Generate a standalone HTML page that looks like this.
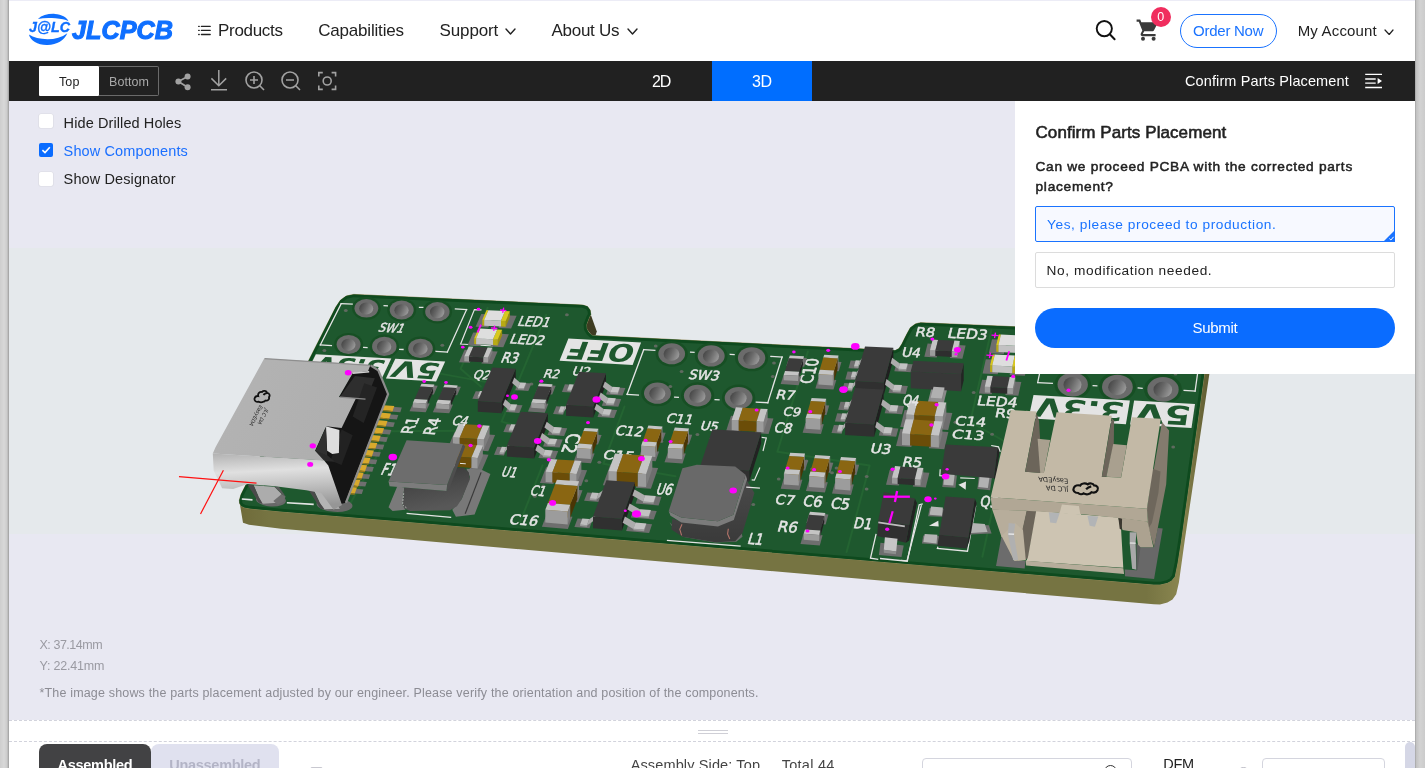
<!DOCTYPE html>
<html lang="en">
<head>
<meta charset="utf-8">
<title>JLCPCB - Confirm Parts Placement</title>
<style>
*{box-sizing:border-box;margin:0;padding:0}
html,body{width:1425px;height:768px;overflow:hidden}
body{font-family:"Liberation Sans",sans-serif;color:#222;background:linear-gradient(90deg,#cecece 0,#d8d8d8 4px,#cccccc 7px,#a8a8a8 8.5px,#a2a2a2 9px,#fff 9px,#fff 1415px,#a2a2a2 1415px,#c2c2c2 1416.4px,#d3d3d3 1420px,#cbcbcb 1425px);position:relative}
#page{position:absolute;left:9px;top:0;width:1406px;height:768px;background:#fff;overflow:hidden;will-change:transform}
.t{position:absolute;white-space:nowrap;display:block}
.a{position:absolute}
#hdr{position:absolute;left:0;top:0;width:1406px;height:61px;background:#fff;border-top:1px solid #ececf6}
#bar{position:absolute;left:0;top:61px;width:1406px;height:39.5px;background:#212121}
#view{position:absolute;left:0;top:100.5px;width:1406px;height:619.5px;background:#e8e8f2;overflow:hidden}
#canvas{position:absolute;left:0;top:147.5px;width:1406px;height:286px;background:#e5e9ec}
#pcb{position:absolute;left:-9px;top:-100.5px;width:1425px;height:768px}
#handle{position:absolute;left:0;top:720px;width:1406px;height:22px;background:#fff;border-top:1px dashed #d2d3dc;border-bottom:1px dashed #d2d3dc}
#panel{position:absolute;left:1005.8px;top:100.5px;width:400.2px;height:273px;background:#fff}
.cb{position:absolute;width:13.4px;height:13.4px;background:#fff;border-radius:2px;box-shadow:0 0 0 0.6px #dadae2}
.opt{position:absolute;left:1026px;width:360px;height:35.5px;border:1px solid #dcdcdc;border-radius:2px;background:#fff}
</style>
</head>
<body>
<div id="page">

<div id="hdr">
</div>
<svg class="a" style="left:19px;top:12px" width="148" height="36" viewBox="28 12 148 36">
<g fill="#0f6fff">
<path d="M28.9 34.6 C30.5 41 38 45.3 47.5 45 C57 44.7 64.5 40.2 67.3 33.2 C62 37.2 55 39.2 47.5 39.2 C40 39.2 33.5 37.6 28.9 34.6Z"/>
<path d="M37.9 18.9 C42 15.2 48.5 13.5 55 13.9 C61.5 14.3 66.8 17 68.5 21.3 C65.5 19.4 61 18.6 55.5 18.2 C49 17.7 43 17.8 37.9 18.9Z"/>
</g>
<text x="29" y="31.8" font-family="Liberation Sans, sans-serif" font-weight="700" font-style="italic" font-size="14.5" fill="#0f6fff" stroke="#0f6fff" stroke-width="0.3" textLength="41" lengthAdjust="spacingAndGlyphs">J@LC</text>
<text x="72" y="39" font-family="Liberation Sans, sans-serif" font-weight="700" font-style="italic" font-size="26" fill="#0f6fff" stroke="#0f6fff" stroke-width="1.1" textLength="101" lengthAdjust="spacingAndGlyphs">JLCPCB</text>
</svg>
<svg class="a" style="left:189px;top:24px" width="13" height="13" viewBox="0 0 13 13"><g fill="none" stroke="#222" stroke-width="1.3" stroke-linecap="round"><path d="M3.4 2.4H12.2M3.4 6.4H12.2M3.4 10.5H12.2"/><path d="M0.7 2.4h0.5M0.7 6.4h0.5M0.7 10.5h0.5"/></g></svg>
<span class="t" style="left:209.00px;top:21.00px;font-size:17.00px;line-height:20px;letter-spacing:-0.298px;color:#222;">Products</span>
<span class="t" style="left:309.20px;top:21.00px;font-size:17.00px;line-height:20px;letter-spacing:-0.189px;color:#222;">Capabilities</span>
<span class="t" style="left:430.50px;top:21.00px;font-size:17.00px;line-height:20px;letter-spacing:-0.124px;color:#222;">Support</span>
<span class="t" style="left:542.50px;top:21.00px;font-size:17.00px;line-height:20px;letter-spacing:-0.275px;color:#222;">About Us</span>
<svg class="a" style="left:495.5px;top:27.8px" width="11" height="7" viewBox="-1 -1 11 7"><path d="M0 0L4.5 5.0L9 0" fill="none" stroke="#222" stroke-width="1.4" stroke-linecap="round" stroke-linejoin="round"/></svg>
<svg class="a" style="left:617.5px;top:27.8px" width="11" height="7" viewBox="-1 -1 11 7"><path d="M0 0L4.5 5.0L9 0" fill="none" stroke="#222" stroke-width="1.4" stroke-linecap="round" stroke-linejoin="round"/></svg>
<svg class="a" style="left:1086px;top:19px" width="22" height="22" viewBox="0 0 22 22"><circle cx="9.3" cy="9.6" r="7.6" fill="none" stroke="#111" stroke-width="1.9"/><path d="M14.8 15.2L19.6 20.2" stroke="#111" stroke-width="2" stroke-linecap="round"/></svg>
<svg class="a" style="left:1127px;top:19px" width="24" height="23" viewBox="0 0 24 23"><g fill="#3a3a3a"><path d="M0.6 0.6H4.2L5.3 3.2H20.6C21.4 3.2 21.8 3.9 21.5 4.6L18 11.3C17.7 11.9 17 12.3 16.3 12.3H8.3L7 14.6C6.9 14.8 7 15.1 7.3 15.1H19.6V17.2H6.6C5 17.2 4.1 15.5 4.9 14.2L6.3 11.6L2.8 2.8H0.6Z"/><circle cx="7" cy="19.8" r="2"/><circle cx="17.6" cy="19.8" r="2"/></g></svg>
<div class="a" style="left:1141.5px;top:7px;width:20px;height:20px;border-radius:10px;background:#f02d5e"></div>
<span class="t" style="left:1148.20px;top:10.00px;font-size:12.50px;line-height:15px;letter-spacing:0.048px;color:#fff;">0</span>
<div class="a" style="left:1171px;top:14px;width:97px;height:34px;border:1px solid #1a73ff;border-radius:17px"></div>
<span class="t" style="left:1184.10px;top:22.00px;font-size:15.00px;line-height:18px;letter-spacing:-0.265px;color:#1a73ff;">Order Now</span>
<span class="t" style="left:1288.70px;top:22.00px;font-size:15.00px;line-height:18px;letter-spacing:0.174px;color:#222;">My Account</span>
<svg class="a" style="left:1374.7px;top:28.9px" width="10" height="6" viewBox="-1 -1 10 6"><path d="M0 0L4.2 4.5L8 0" fill="none" stroke="#222" stroke-width="1.2" stroke-linecap="round" stroke-linejoin="round"/></svg>
<div id="bar">
<div class="a" style="left:30px;top:5px;width:60px;height:30px;background:#fff;border-radius:1px"></div>
<div class="a" style="left:90px;top:5px;width:59.5px;height:30px;border:1px solid #6a6a6a;border-left:none;border-radius:0 2px 2px 0"></div>
<div class="a" style="left:703px;top:0;width:100px;height:39.5px;background:#006eff"></div>
</div>
<span class="t" style="left:50.00px;top:75.00px;font-size:12.50px;line-height:15px;letter-spacing:0.123px;color:#222;">Top</span>
<span class="t" style="left:100.00px;top:75.00px;font-size:12.50px;line-height:15px;letter-spacing:0.080px;color:#a9a9a9;">Bottom</span>
<span class="t" style="left:643.00px;top:72.00px;font-size:16.00px;line-height:19px;letter-spacing:-1.053px;color:#fff;">2D</span>
<span class="t" style="left:742.90px;top:72.00px;font-size:16.00px;line-height:19px;letter-spacing:-0.353px;color:#fff;">3D</span>
<span class="t" style="left:1176.00px;top:73.00px;font-size:14.50px;line-height:17px;letter-spacing:0.115px;color:#fff;">Confirm Parts Placement</span>
<svg class="a" style="left:165px;top:72px" width="19" height="19" viewBox="174 72 19 19"><g fill="#a2a2a2"><circle cx="187.6" cy="76.6" r="3"/><circle cx="178.4" cy="81.6" r="3"/><circle cx="187.6" cy="87.2" r="3"/></g><path d="M187.6 76.6L178.4 81.6L187.6 87.2" fill="none" stroke="#a2a2a2" stroke-width="1.7"/></svg>
<svg class="a" style="left:200px;top:69px" width="20" height="23" viewBox="209 69 20 23"><g fill="none" stroke="#a2a2a2" stroke-width="1.5"><path d="M218.8 70V85.6M211.4 78.4L218.8 85.8L226.2 78.4M211 89.8H227"/></g></svg>
<svg class="a" style="left:235px;top:70px" width="22" height="22" viewBox="244 70 22 22"><g fill="none" stroke="#a2a2a2" stroke-width="1.6"><circle cx="254" cy="80" r="8"/><path d="M259.8 85.8L264 90M250 80H258M254 76V84"/></g></svg>
<svg class="a" style="left:271px;top:70px" width="22" height="22" viewBox="280 70 22 22"><g fill="none" stroke="#a2a2a2" stroke-width="1.6"><circle cx="290" cy="80" r="8"/><path d="M295.8 85.8L300 90M286 80H294"/></g></svg>
<svg class="a" style="left:308px;top:70px" width="22" height="22" viewBox="317 70 22 22"><g fill="none" stroke="#a2a2a2" stroke-width="1.6"><circle cx="327.2" cy="81" r="4"/><path d="M318.8 76.5V72.6H322.8M331.6 72.6H335.6V76.5M335.6 85.5V89.4H331.6M322.8 89.4H318.8V85.5"/></g></svg>
<svg class="a" style="left:1355px;top:72px" width="20" height="17" viewBox="1364 72 20 17"><g fill="none" stroke="#fff" stroke-width="1.3"><path d="M1365.2 74.4H1382M1365.2 79H1375.7M1365.2 83.2H1375.7M1365.2 87.5H1382"/></g><path d="M1377.6 78.1L1382 81L1377.6 83.9Z" fill="#fff"/></svg>
<div id="view"><div id="canvas"></div>
<svg id="pcb" viewBox="0 0 1425 768"><defs><clipPath id="cb"><polygon points="335.7,307.3 340.4,300.2 346.2,296.1 353.8,294.4 582.8,305.1 587.5,306.6 590.2,310.2 590.8,314.5 589.3,317.1 586.4,324.6 586.7,328.9 589.0,332.8 591.9,335.4 595.5,335.7 895.1,350.6 899.0,348.6 901.9,343.9 906.1,335.4 910.3,327.8 915.4,323.9 920.5,322.7 1209.8,335.0 1204.3,373.9 1181.1,540.0 1177.5,562.8 1174.7,576.4 1171.5,580.6 1167.4,582.8 1160.0,584.6 1153.8,584.6 385.0,520.0 281.1,511.5 250.0,508.6 244.5,507.6 241.3,505.9 239.6,503.3 239.4,500.3 241.0,494.5 309.3,359.4"/></clipPath></defs>
<defs><linearGradient id="gh" x1="0" y1="0.3" x2="1" y2="0.7"><stop offset="0" stop-color="#454545"/><stop offset="0.45" stop-color="#686868"/><stop offset="1" stop-color="#9e9e9e"/></linearGradient></defs>
<defs><linearGradient id="gw" x1="0" y1="0" x2="1" y2="0"><stop offset="0" stop-color="#6f6b3a"/><stop offset="0.03" stop-color="#767442"/><stop offset="0.93" stop-color="#767442"/><stop offset="0.965" stop-color="#8a8650"/><stop offset="1" stop-color="#55522a"/></linearGradient></defs>
<polygon points="239.4,501.4 243.0,522.7 249.0,524.8 281.1,528.8 385.0,537.6 1153.8,604.3 1160.0,604.4 1167.4,602.6 1172.5,599.4 1176.2,594.2 1178.9,582.6 1184.8,540.0 1209.2,374.9 1214.8,335.2 1209.8,335.0 1204.3,373.9 1181.1,540.0 1177.5,562.8 1174.7,576.4 1171.5,580.6 1167.4,582.8 1160.0,584.6 1153.8,584.6 385.0,520.0 281.1,511.5 250.0,508.6 244.5,507.6 241.3,505.9 239.6,503.3" fill="url(#gw)"/>
<polygon points="590.9,314.9 596.8,331.5 595.5,335.6 591.9,335.8 586.7,328.9 586.4,324.6 589.3,317.1" fill="#3e3c22"/>
<polygon points="335.7,307.3 340.4,300.2 346.2,296.1 353.8,294.4 582.8,305.1 587.5,306.6 590.2,310.2 590.8,314.5 589.3,317.1 586.4,324.6 586.7,328.9 589.0,332.8 591.9,335.4 595.5,335.7 895.1,350.6 899.0,348.6 901.9,343.9 906.1,335.4 910.3,327.8 915.4,323.9 920.5,322.7 1209.8,335.0 1204.3,373.9 1181.1,540.0 1177.5,562.8 1174.7,576.4 1171.5,580.6 1167.4,582.8 1160.0,584.6 1153.8,584.6 385.0,520.0 281.1,511.5 250.0,508.6 244.5,507.6 241.3,505.9 239.6,503.3 239.4,500.3 241.0,494.5 309.3,359.4" fill="#0e4a1e" stroke="#8f8858" stroke-width="0.9" stroke-linejoin="round"/>
<polygon points="335.7,307.3 340.4,300.2 346.2,296.1 353.8,294.4 582.8,305.1 587.5,306.6 590.2,310.2 590.8,314.5 589.3,317.1 586.4,324.6 586.7,328.9 589.0,332.8 591.9,335.4 595.5,335.7 895.1,350.6 899.0,348.6 901.9,343.9 906.1,335.4 910.3,327.8 915.4,323.9 920.5,322.7 1209.8,335.0 1204.3,373.9 1181.1,540.0 1177.5,562.8 1174.7,576.4 1171.5,580.6 1167.4,582.8 1160.0,584.6 1153.8,584.6 385.0,520.0 281.1,511.5 250.0,508.6 244.5,507.6 241.3,505.9 239.6,503.3 239.4,500.3 241.0,494.5 309.3,359.4" fill="#1e582e" stroke="#0e4a1e" stroke-width="5.5" stroke-linejoin="round" clip-path="url(#cb)"/>
<polyline points="487.6,307.9 460.6,368.8 480.8,386.5" fill="none" stroke="#246432" stroke-width="2.00" stroke-linejoin="round" stroke-linecap="round"/>
<polyline points="350.3,357.2 489.5,382.6" fill="none" stroke="#246432" stroke-width="1.60" stroke-linejoin="round" stroke-linecap="round"/>
<polyline points="546.1,314.9 501.6,421.6 553.8,436.6" fill="none" stroke="#246432" stroke-width="2.00" stroke-linejoin="round" stroke-linecap="round"/>
<polyline points="624.5,406.5 603.3,463.8 675.5,476.3" fill="none" stroke="#246432" stroke-width="2.00" stroke-linejoin="round" stroke-linecap="round"/>
<polyline points="807.9,351.5 777.4,451.8 869.6,465.5 846.6,552.1" fill="none" stroke="#246432" stroke-width="2.00" stroke-linejoin="round" stroke-linecap="round"/>
<polyline points="991.3,330.5 970.2,422.0 1006.9,442.6 982.4,556.7" fill="none" stroke="#246432" stroke-width="2.00" stroke-linejoin="round" stroke-linecap="round"/>
<polyline points="520.0,522.4 542.5,465.4" fill="none" stroke="#246432" stroke-width="2.00" stroke-linejoin="round" stroke-linecap="round"/>
<polyline points="348.4,507.0 390.5,431.2 468.8,430.8" fill="none" stroke="#246432" stroke-width="2.00" stroke-linejoin="round" stroke-linecap="round"/>
<ellipse cx="366.4" cy="308.3" rx="14.3" ry="11.5" fill="#174f24"/>
<ellipse cx="366.4" cy="308.3" rx="11.9" ry="9.3" fill="#6b6b6b"/>
<ellipse cx="366.2" cy="308.6" rx="7.0" ry="6.0" fill="url(#gh)"/>
<ellipse cx="348.6" cy="344.5" rx="14.5" ry="11.6" fill="#174f24"/>
<ellipse cx="348.6" cy="344.5" rx="12.0" ry="9.4" fill="#6b6b6b"/>
<ellipse cx="348.4" cy="344.8" rx="7.1" ry="6.1" fill="url(#gh)"/>
<ellipse cx="401.7" cy="310.0" rx="14.5" ry="11.6" fill="#174f24"/>
<ellipse cx="401.7" cy="310.0" rx="12.0" ry="9.4" fill="#6b6b6b"/>
<ellipse cx="401.5" cy="310.3" rx="7.1" ry="6.1" fill="url(#gh)"/>
<ellipse cx="384.3" cy="346.4" rx="14.7" ry="11.8" fill="#174f24"/>
<ellipse cx="384.3" cy="346.4" rx="12.2" ry="9.6" fill="#6b6b6b"/>
<ellipse cx="384.1" cy="346.7" rx="7.2" ry="6.2" fill="url(#gh)"/>
<ellipse cx="437.4" cy="311.7" rx="14.7" ry="11.8" fill="#174f24"/>
<ellipse cx="437.4" cy="311.7" rx="12.2" ry="9.6" fill="#6b6b6b"/>
<ellipse cx="437.2" cy="312.0" rx="7.2" ry="6.2" fill="url(#gh)"/>
<ellipse cx="420.5" cy="348.4" rx="14.8" ry="11.9" fill="#174f24"/>
<ellipse cx="420.5" cy="348.4" rx="12.3" ry="9.7" fill="#6b6b6b"/>
<ellipse cx="420.3" cy="348.7" rx="7.3" ry="6.2" fill="url(#gh)"/>
<ellipse cx="671.7" cy="353.8" rx="16.1" ry="12.9" fill="#174f24"/>
<ellipse cx="671.7" cy="353.8" rx="13.4" ry="10.5" fill="#6b6b6b"/>
<ellipse cx="671.5" cy="354.1" rx="7.9" ry="6.7" fill="url(#gh)"/>
<ellipse cx="657.5" cy="393.2" rx="16.3" ry="13.1" fill="#174f24"/>
<ellipse cx="657.5" cy="393.2" rx="13.5" ry="10.6" fill="#6b6b6b"/>
<ellipse cx="657.3" cy="393.5" rx="8.0" ry="6.8" fill="url(#gh)"/>
<ellipse cx="711.2" cy="355.9" rx="16.3" ry="13.1" fill="#174f24"/>
<ellipse cx="711.2" cy="355.9" rx="13.5" ry="10.6" fill="#6b6b6b"/>
<ellipse cx="711.0" cy="356.2" rx="8.0" ry="6.8" fill="url(#gh)"/>
<ellipse cx="697.6" cy="395.6" rx="16.5" ry="13.3" fill="#174f24"/>
<ellipse cx="697.6" cy="395.6" rx="13.7" ry="10.8" fill="#6b6b6b"/>
<ellipse cx="697.4" cy="395.9" rx="8.1" ry="6.9" fill="url(#gh)"/>
<ellipse cx="751.6" cy="358.0" rx="16.5" ry="13.3" fill="#174f24"/>
<ellipse cx="751.6" cy="358.0" rx="13.7" ry="10.8" fill="#6b6b6b"/>
<ellipse cx="751.4" cy="358.3" rx="8.1" ry="6.9" fill="url(#gh)"/>
<ellipse cx="738.6" cy="398.0" rx="16.7" ry="13.5" fill="#174f24"/>
<ellipse cx="738.6" cy="398.0" rx="13.9" ry="10.9" fill="#6b6b6b"/>
<ellipse cx="738.4" cy="398.3" rx="8.2" ry="7.0" fill="url(#gh)"/>
<ellipse cx="1072.7" cy="384.5" rx="18.3" ry="14.7" fill="#174f24"/>
<ellipse cx="1072.7" cy="384.5" rx="15.2" ry="12.0" fill="#6b6b6b"/>
<ellipse cx="1072.5" cy="384.8" rx="9.0" ry="7.7" fill="url(#gh)"/>
<ellipse cx="1117.4" cy="386.9" rx="18.6" ry="14.9" fill="#174f24"/>
<ellipse cx="1117.4" cy="386.9" rx="15.4" ry="12.1" fill="#6b6b6b"/>
<ellipse cx="1117.2" cy="387.2" rx="9.1" ry="7.8" fill="url(#gh)"/>
<ellipse cx="1163.0" cy="389.4" rx="18.9" ry="15.1" fill="#174f24"/>
<ellipse cx="1163.0" cy="389.4" rx="15.7" ry="12.3" fill="#6b6b6b"/>
<ellipse cx="1162.8" cy="389.7" rx="9.3" ry="7.9" fill="url(#gh)"/>
<polyline points="341.2,303.6 320.3,345.0" fill="none" stroke="#e4e4e4" stroke-width="1.30" stroke-linecap="square"/>
<polyline points="466.6,309.5 447.4,352.0" fill="none" stroke="#e4e4e4" stroke-width="1.30" stroke-linecap="square"/>
<polyline points="341.2,303.6 352.2,304.1" fill="none" stroke="#e4e4e4" stroke-width="1.30" stroke-linecap="square"/>
<polyline points="384.1,305.6 387.3,305.8" fill="none" stroke="#e4e4e4" stroke-width="1.30" stroke-linecap="square"/>
<polyline points="419.5,307.3 422.8,307.4" fill="none" stroke="#e4e4e4" stroke-width="1.30" stroke-linecap="square"/>
<polyline points="455.4,309.0 466.6,309.5" fill="none" stroke="#e4e4e4" stroke-width="1.30" stroke-linecap="square"/>
<polyline points="320.3,345.0 331.4,345.6" fill="none" stroke="#e4e4e4" stroke-width="1.30" stroke-linecap="square"/>
<polyline points="363.7,347.4 367.0,347.6" fill="none" stroke="#e4e4e4" stroke-width="1.30" stroke-linecap="square"/>
<polyline points="399.7,349.4 403.0,349.5" fill="none" stroke="#e4e4e4" stroke-width="1.30" stroke-linecap="square"/>
<polyline points="436.1,351.3 447.4,352.0" fill="none" stroke="#e4e4e4" stroke-width="1.30" stroke-linecap="square"/>
<polyline points="643.7,349.7 627.1,394.3" fill="none" stroke="#e4e4e4" stroke-width="1.30" stroke-linecap="square"/>
<polyline points="782.1,357.0 767.8,402.7" fill="none" stroke="#e4e4e4" stroke-width="1.30" stroke-linecap="square"/>
<polyline points="643.7,349.7 654.8,350.3" fill="none" stroke="#e4e4e4" stroke-width="1.30" stroke-linecap="square"/>
<polyline points="690.6,352.2 694.0,352.3" fill="none" stroke="#e4e4e4" stroke-width="1.30" stroke-linecap="square"/>
<polyline points="730.3,354.3 734.1,354.5" fill="none" stroke="#e4e4e4" stroke-width="1.30" stroke-linecap="square"/>
<polyline points="770.9,356.4 782.1,357.0" fill="none" stroke="#e4e4e4" stroke-width="1.30" stroke-linecap="square"/>
<polyline points="627.1,394.3 638.4,395.0" fill="none" stroke="#e4e4e4" stroke-width="1.30" stroke-linecap="square"/>
<polyline points="674.7,397.2 678.3,397.4" fill="none" stroke="#e4e4e4" stroke-width="1.30" stroke-linecap="square"/>
<polyline points="715.1,399.6 719.0,399.8" fill="none" stroke="#e4e4e4" stroke-width="1.30" stroke-linecap="square"/>
<polyline points="756.3,402.1 767.8,402.7" fill="none" stroke="#e4e4e4" stroke-width="1.30" stroke-linecap="square"/>
<polyline points="1044.0,352.2 1037.7,382.6" fill="none" stroke="#e4e4e4" stroke-width="1.30" stroke-linecap="square"/>
<polyline points="1199.5,360.0 1195.1,391.1" fill="none" stroke="#e4e4e4" stroke-width="1.30" stroke-linecap="square"/>
<polyline points="1044.0,352.2 1058.4,353.0" fill="none" stroke="#e4e4e4" stroke-width="1.30" stroke-linecap="square"/>
<polyline points="1098.8,355.0 1102.4,355.1" fill="none" stroke="#e4e4e4" stroke-width="1.30" stroke-linecap="square"/>
<polyline points="1143.3,357.2 1147.1,357.4" fill="none" stroke="#e4e4e4" stroke-width="1.30" stroke-linecap="square"/>
<polyline points="1188.7,359.4 1199.5,360.0" fill="none" stroke="#e4e4e4" stroke-width="1.30" stroke-linecap="square"/>
<polyline points="1037.7,382.6 1052.3,383.4" fill="none" stroke="#e4e4e4" stroke-width="1.30" stroke-linecap="square"/>
<polyline points="1093.2,385.6 1096.8,385.8" fill="none" stroke="#e4e4e4" stroke-width="1.30" stroke-linecap="square"/>
<polyline points="1138.2,388.0 1142.1,388.3" fill="none" stroke="#e4e4e4" stroke-width="1.30" stroke-linecap="square"/>
<polyline points="1184.1,390.5 1195.1,391.1" fill="none" stroke="#e4e4e4" stroke-width="1.30" stroke-linecap="square"/>
<polyline points="481.5,309.8 474.4,309.6 460.6,344.0 493.1,346.0" fill="none" stroke="#e4e4e4" stroke-width="1.20"/>
<polygon points="315.9,354.2 391.3,358.4 381.9,378.3 306.0,373.8" fill="#e4e4e4"/>
<text transform="matrix(-0.9984 -0.0564 0.4289 -0.9059 387.29 360.47)" font-family="DejaVu Sans, sans-serif" font-weight="bold" font-size="23.7" fill="#1e582e" textLength="69.5" lengthAdjust="spacingAndGlyphs">3.3V</text>
<polygon points="395.3,358.7 445.2,361.5 436.1,381.6 385.9,378.6" fill="#e4e4e4"/>
<text transform="matrix(-0.9984 -0.0564 0.4118 -0.9132 442.21 363.59)" font-family="DejaVu Sans, sans-serif" font-weight="bold" font-size="23.8" fill="#1e582e" textLength="46.0" lengthAdjust="spacingAndGlyphs">5V</text>
<polygon points="568.4,338.6 641.1,342.4 632.6,364.9 559.5,360.8" fill="#e4e4e4"/>
<text transform="matrix(-0.9987 -0.0514 0.3513 -0.9399 637.22 344.71)" font-family="DejaVu Sans, sans-serif" font-weight="bold" font-size="25.8" fill="#1e582e" textLength="66.9" lengthAdjust="spacingAndGlyphs">OFF</text>
<polygon points="1033.5,394.9 1129.9,400.4 1125.9,424.2 1028.6,418.3" fill="#e4e4e4"/>
<text transform="matrix(-0.9984 -0.0564 0.1678 -0.9960 1125.62 402.78)" font-family="DejaVu Sans, sans-serif" font-weight="bold" font-size="25.8" fill="#1e582e" textLength="88.9" lengthAdjust="spacingAndGlyphs">3.3V</text>
<polygon points="1134.1,400.6 1195.0,404.1 1191.5,428.1 1130.1,424.4" fill="#e4e4e4"/>
<text transform="matrix(-0.9984 -0.0564 0.1417 -0.9970 1192.16 406.57)" font-family="DejaVu Sans, sans-serif" font-weight="bold" font-size="26.1" fill="#1e582e" textLength="56.1" lengthAdjust="spacingAndGlyphs">5V</text>
<ellipse cx="345.8" cy="310.4" rx="1.9" ry="1.5" fill="#5f6a5f"/>
<ellipse cx="442.3" cy="345.3" rx="1.9" ry="1.5" fill="#5f6a5f"/>
<ellipse cx="324.4" cy="350.5" rx="1.9" ry="1.5" fill="#5f6a5f"/>
<ellipse cx="566.9" cy="314.8" rx="1.9" ry="1.5" fill="#5f6a5f"/>
<ellipse cx="655.7" cy="345.9" rx="1.9" ry="1.5" fill="#5f6a5f"/>
<ellipse cx="681.6" cy="371.5" rx="1.9" ry="1.5" fill="#5f6a5f"/>
<ellipse cx="670.3" cy="386.6" rx="1.9" ry="1.5" fill="#5f6a5f"/>
<ellipse cx="774.0" cy="363.1" rx="1.9" ry="1.5" fill="#5f6a5f"/>
<ellipse cx="772.8" cy="376.6" rx="1.9" ry="1.5" fill="#5f6a5f"/>
<ellipse cx="531.5" cy="384.0" rx="1.9" ry="1.5" fill="#5f6a5f"/>
<ellipse cx="464.3" cy="424.8" rx="1.9" ry="1.5" fill="#5f6a5f"/>
<ellipse cx="697.4" cy="434.5" rx="1.9" ry="1.5" fill="#5f6a5f"/>
<ellipse cx="711.3" cy="439.0" rx="1.9" ry="1.5" fill="#5f6a5f"/>
<ellipse cx="661.4" cy="441.6" rx="1.9" ry="1.5" fill="#5f6a5f"/>
<ellipse cx="676.0" cy="439.0" rx="1.9" ry="1.5" fill="#5f6a5f"/>
<ellipse cx="791.8" cy="456.4" rx="1.9" ry="1.5" fill="#5f6a5f"/>
<ellipse cx="806.4" cy="461.1" rx="1.9" ry="1.5" fill="#5f6a5f"/>
<ellipse cx="822.1" cy="462.2" rx="1.9" ry="1.5" fill="#5f6a5f"/>
<ellipse cx="836.5" cy="468.1" rx="1.9" ry="1.5" fill="#5f6a5f"/>
<ellipse cx="851.4" cy="472.9" rx="1.9" ry="1.5" fill="#5f6a5f"/>
<ellipse cx="866.7" cy="476.5" rx="1.9" ry="1.5" fill="#5f6a5f"/>
<ellipse cx="812.1" cy="468.9" rx="1.9" ry="1.5" fill="#5f6a5f"/>
<ellipse cx="832.0" cy="472.8" rx="1.9" ry="1.5" fill="#5f6a5f"/>
<ellipse cx="866.6" cy="489.0" rx="1.9" ry="1.5" fill="#5f6a5f"/>
<ellipse cx="778.7" cy="478.9" rx="1.9" ry="1.5" fill="#5f6a5f"/>
<ellipse cx="753.3" cy="504.5" rx="1.9" ry="1.5" fill="#5f6a5f"/>
<ellipse cx="988.0" cy="365.4" rx="1.9" ry="1.5" fill="#5f6a5f"/>
<ellipse cx="973.7" cy="392.5" rx="1.9" ry="1.5" fill="#5f6a5f"/>
<ellipse cx="955.4" cy="422.3" rx="1.9" ry="1.5" fill="#5f6a5f"/>
<ellipse cx="992.1" cy="434.3" rx="1.9" ry="1.5" fill="#5f6a5f"/>
<ellipse cx="942.0" cy="437.2" rx="1.9" ry="1.5" fill="#5f6a5f"/>
<ellipse cx="1173.2" cy="446.9" rx="1.9" ry="1.5" fill="#5f6a5f"/>
<ellipse cx="1175.5" cy="374.0" rx="1.9" ry="1.5" fill="#5f6a5f"/>
<ellipse cx="543.4" cy="486.0" rx="1.9" ry="1.5" fill="#5f6a5f"/>
<ellipse cx="534.8" cy="496.3" rx="1.9" ry="1.5" fill="#5f6a5f"/>
<ellipse cx="599.3" cy="462.3" rx="1.9" ry="1.5" fill="#5f6a5f"/>
<ellipse cx="586.3" cy="480.7" rx="1.9" ry="1.5" fill="#5f6a5f"/>
<text transform="matrix(1.5268 0.0891 -0.5167 1.1927 482.60 374.75)" x="0" y="3.65" text-anchor="middle" font-family="DejaVu Sans, sans-serif" font-size="10.0" font-weight="normal" fill="#e4e4e4" stroke="#e4e4e4" stroke-width="0.38" textLength="11.13" lengthAdjust="spacingAndGlyphs">Q2</text>
<text transform="matrix(1.5508 0.0880 -0.4681 1.1897 581.85 371.15)" x="0" y="3.65" text-anchor="middle" font-family="DejaVu Sans, sans-serif" font-size="10.0" font-weight="normal" fill="#e4e4e4" stroke="#e4e4e4" stroke-width="0.38" textLength="11.51" lengthAdjust="spacingAndGlyphs">U2</text>
<text transform="matrix(1.9218 0.1451 -0.7185 1.5838 389.50 469.30)" x="0" y="3.65" text-anchor="middle" font-family="DejaVu Sans, sans-serif" font-size="10.0" font-weight="normal" fill="#e4e4e4" stroke="#e4e4e4" stroke-width="0.38" textLength="7.14" lengthAdjust="spacingAndGlyphs">F1</text>
<text transform="matrix(1.5706 0.1105 -0.4531 1.2385 619.00 455.40)" x="0" y="3.65" text-anchor="middle" font-family="DejaVu Sans, sans-serif" font-size="10.0" font-weight="normal" fill="#e4e4e4" stroke="#e4e4e4" stroke-width="0.38" textLength="19.49" lengthAdjust="spacingAndGlyphs">C15</text>
<text transform="matrix(1.6631 0.0991 -0.2635 1.2124 1005.55 413.25)" x="0" y="3.65" text-anchor="middle" font-family="DejaVu Sans, sans-serif" font-size="10.0" font-weight="normal" fill="#e4e4e4" stroke="#e4e4e4" stroke-width="0.38" textLength="12.59" lengthAdjust="spacingAndGlyphs">R9</text>
<text transform="matrix(1.5761 0.1017 -0.4042 1.2104 709.90 426.00)" x="0" y="3.65" text-anchor="middle" font-family="DejaVu Sans, sans-serif" font-size="10.0" font-weight="normal" fill="#e4e4e4" stroke="#e4e4e4" stroke-width="0.38" textLength="11.43" lengthAdjust="spacingAndGlyphs">U5</text>
<text transform="matrix(1.9829 0.1457 -0.3242 1.5004 989.65 501.75)" x="0" y="3.65" text-anchor="middle" font-family="DejaVu Sans, sans-serif" font-size="10.0" font-weight="normal" fill="#e4e4e4" stroke="#e4e4e4" stroke-width="0.38" textLength="9.22" lengthAdjust="spacingAndGlyphs">Q3</text>
<text transform="matrix(0.5829 -1.2854 1.5925 0.1078 409.90 425.40)" x="0" y="3.65" text-anchor="middle" font-family="DejaVu Sans, sans-serif" font-size="10.0" font-weight="normal" fill="#e4e4e4" stroke="#e4e4e4" stroke-width="0.38">R1</text>
<text transform="matrix(0.5736 -1.2906 1.6043 0.1085 432.00 426.50)" x="0" y="3.65" text-anchor="middle" font-family="DejaVu Sans, sans-serif" font-size="10.0" font-weight="normal" fill="#e4e4e4" stroke="#e4e4e4" stroke-width="0.38">R4</text>
<text transform="matrix(0.3901 -1.2962 1.7535 0.0959 809.20 371.00)" x="0" y="3.65" text-anchor="middle" font-family="DejaVu Sans, sans-serif" font-size="10.0" font-weight="normal" fill="#e4e4e4" stroke="#e4e4e4" stroke-width="0.38">C10</text>
<text transform="matrix(-0.5763 1.4917 -1.8856 -0.1299 571.50 443.50)" x="0" y="3.65" text-anchor="middle" font-family="DejaVu Sans, sans-serif" font-size="10.0" font-weight="normal" fill="#e4e4e4" stroke="#e4e4e4" stroke-width="0.38">C2</text>
<polygon points="481.3,314.1 493.9,314.7 488.3,327.4 475.6,326.8" fill="#6e6e6e"/>
<polygon points="503.9,315.2 516.6,315.8 511.1,328.6 498.3,327.9" fill="#6e6e6e"/>
<polygon points="488.4,310.2 484.2,319.9 484.2,325.7 488.4,316.0" fill="#9a8e10"/>
<polygon points="482.3,319.8 484.2,319.9 484.2,325.7 482.3,325.6" fill="#b8aa14"/>
<polygon points="486.6,310.1 488.4,310.2 484.2,319.9 482.3,319.8" fill="#d8c81e"/>
<polygon points="505.2,311.0 501.0,320.7 501.0,326.5 505.2,316.8" fill="#9a9a9a"/>
<polygon points="484.2,319.9 501.0,320.7 501.0,326.5 484.2,325.7" fill="#c2c2c2"/>
<polygon points="488.4,310.2 505.2,311.0 501.0,320.7 484.2,319.9" fill="#dedede"/>
<polygon points="509.9,311.2 505.7,320.9 505.7,326.7 509.9,317.0" fill="#9a8e10"/>
<polygon points="501.0,320.7 505.7,320.9 505.7,326.7 501.0,326.5" fill="#b8aa14"/>
<polygon points="505.2,311.0 509.9,311.2 505.7,320.9 501.0,320.7" fill="#d8c81e"/>
<polygon points="473.2,332.4 485.9,333.1 480.3,346.0 467.5,345.3" fill="#6e6e6e"/>
<polygon points="496.0,333.6 508.8,334.3 503.3,347.3 490.4,346.6" fill="#6e6e6e"/>
<polygon points="480.4,328.6 476.1,338.4 476.1,344.2 480.4,334.4" fill="#9a8e10"/>
<polygon points="474.2,338.3 476.1,338.4 476.1,344.2 474.2,344.1" fill="#b8aa14"/>
<polygon points="478.6,328.5 480.4,328.6 476.1,338.4 474.2,338.3" fill="#d8c81e"/>
<polygon points="497.4,329.4 493.1,339.3 493.1,345.1 497.4,335.3" fill="#9a9a9a"/>
<polygon points="476.1,338.4 493.1,339.3 493.1,345.1 476.1,344.2" fill="#c2c2c2"/>
<polygon points="480.4,328.6 497.4,329.4 493.1,339.3 476.1,338.4" fill="#dedede"/>
<polygon points="502.1,329.7 497.8,339.5 497.8,345.4 502.1,335.5" fill="#9a8e10"/>
<polygon points="493.1,339.3 497.8,339.5 497.8,345.4 493.1,345.1" fill="#b8aa14"/>
<polygon points="497.4,329.4 502.1,329.7 497.8,339.5 493.1,339.3" fill="#d8c81e"/>
<polygon points="464.6,349.8 475.3,350.3 469.8,362.8 459.0,362.2" fill="#6e6e6e"/>
<polygon points="486.8,351.0 497.6,351.6 492.2,364.1 481.4,363.5" fill="#6e6e6e"/>
<polygon points="473.4,346.7 469.0,356.6 469.0,361.5 473.4,351.5" fill="#7e7e7e"/>
<polygon points="464.3,356.4 469.0,356.6 469.0,361.5 464.3,361.2" fill="#9c9c9c"/>
<polygon points="468.7,346.4 473.4,346.7 469.0,356.6 464.3,356.4" fill="#c4c4c4"/>
<polygon points="487.6,347.4 483.3,357.4 483.3,362.3 487.6,352.3" fill="#222222"/>
<polygon points="469.0,356.6 483.3,357.4 483.3,362.3 469.0,361.5" fill="#2e2e2e"/>
<polygon points="473.4,346.7 487.6,347.4 483.3,357.4 469.0,356.6" fill="#3b3b3b"/>
<polygon points="492.4,347.7 488.0,357.6 488.0,362.6 492.4,352.6" fill="#7e7e7e"/>
<polygon points="483.3,357.4 488.0,357.6 488.0,362.6 483.3,362.3" fill="#9c9c9c"/>
<polygon points="487.6,347.4 492.4,347.7 488.0,357.6 483.3,357.4" fill="#c4c4c4"/>
<polygon points="927.6,343.6 940.0,344.2 936.7,357.4 924.3,356.8" fill="#6e6e6e"/>
<polygon points="953.2,344.8 965.6,345.5 962.4,358.8 949.9,358.1" fill="#6e6e6e"/>
<polygon points="938.1,339.9 935.4,350.4 935.4,356.0 938.1,345.4" fill="#7e7e7e"/>
<polygon points="930.0,350.2 935.4,350.4 935.4,356.0 930.0,355.7" fill="#9c9c9c"/>
<polygon points="932.7,339.6 938.1,339.9 935.4,350.4 930.0,350.2" fill="#c4c4c4"/>
<polygon points="954.4,340.6 951.8,351.2 951.8,356.9 954.4,346.2" fill="#222222"/>
<polygon points="935.4,350.4 951.8,351.2 951.8,356.9 935.4,356.0" fill="#2e2e2e"/>
<polygon points="938.1,339.9 954.4,340.6 951.8,351.2 935.4,350.4" fill="#3b3b3b"/>
<polygon points="959.8,340.9 957.3,351.5 957.3,357.1 959.8,346.5" fill="#7e7e7e"/>
<polygon points="951.8,351.2 957.3,351.5 957.3,357.1 951.8,356.9" fill="#9c9c9c"/>
<polygon points="954.4,340.6 959.8,340.9 957.3,351.5 951.8,351.2" fill="#c4c4c4"/>
<polygon points="992.0,339.2 1006.9,339.9 1003.8,353.9 988.8,353.2" fill="#6e6e6e"/>
<polygon points="1018.8,340.5 1033.8,341.2 1030.8,355.3 1015.7,354.5" fill="#6e6e6e"/>
<polygon points="1000.9,334.5 998.5,345.1 998.5,352.0 1000.9,341.3" fill="#9a8e10"/>
<polygon points="996.3,345.0 998.5,345.1 998.5,352.0 996.3,351.8" fill="#b8aa14"/>
<polygon points="998.7,334.4 1000.9,334.5 998.5,345.1 996.3,345.0" fill="#d8c81e"/>
<polygon points="1020.8,335.4 1018.5,346.1 1018.5,353.0 1020.8,342.3" fill="#9a9a9a"/>
<polygon points="998.5,345.1 1018.5,346.1 1018.5,353.0 998.5,352.0" fill="#c2c2c2"/>
<polygon points="1000.9,334.5 1020.8,335.4 1018.5,346.1 998.5,345.1" fill="#dedede"/>
<polygon points="1026.3,335.7 1024.0,346.4 1024.0,353.2 1026.3,342.6" fill="#9a8e10"/>
<polygon points="1018.5,346.1 1024.0,346.4 1024.0,353.2 1018.5,353.0" fill="#b8aa14"/>
<polygon points="1020.8,335.4 1026.3,335.7 1024.0,346.4 1018.5,346.1" fill="#d8c81e"/>
<polygon points="985.8,359.3 1000.9,360.1 997.7,374.3 982.6,373.5" fill="#6e6e6e"/>
<polygon points="1012.8,360.7 1027.9,361.4 1024.9,375.7 1009.6,374.9" fill="#6e6e6e"/>
<polygon points="994.8,354.6 992.3,365.4 992.3,372.3 994.8,361.5" fill="#9a8e10"/>
<polygon points="990.1,365.3 992.3,365.4 992.3,372.3 990.1,372.1" fill="#b8aa14"/>
<polygon points="992.6,354.5 994.8,354.6 992.3,365.4 990.1,365.3" fill="#d8c81e"/>
<polygon points="1014.8,355.6 1012.4,366.4 1012.4,373.3 1014.8,362.5" fill="#9a9a9a"/>
<polygon points="992.3,365.4 1012.4,366.4 1012.4,373.3 992.3,372.3" fill="#c2c2c2"/>
<polygon points="994.8,354.6 1014.8,355.6 1012.4,366.4 992.3,365.4" fill="#dedede"/>
<polygon points="1020.4,355.9 1018.0,366.7 1018.0,373.6 1020.4,362.8" fill="#9a8e10"/>
<polygon points="1012.4,366.4 1018.0,366.7 1018.0,373.6 1012.4,373.3" fill="#b8aa14"/>
<polygon points="1014.8,355.6 1020.4,355.9 1018.0,366.7 1012.4,366.4" fill="#d8c81e"/>
<polygon points="982.1,379.8 994.8,380.5 991.7,394.3 978.9,393.6" fill="#6e6e6e"/>
<polygon points="1008.4,381.3 1021.3,382.0 1018.3,395.8 1005.4,395.1" fill="#6e6e6e"/>
<polygon points="992.9,376.1 990.4,387.0 990.4,392.8 992.9,381.8" fill="#7e7e7e"/>
<polygon points="984.8,386.7 990.4,387.0 990.4,392.8 984.8,392.5" fill="#9c9c9c"/>
<polygon points="987.3,375.8 992.9,376.1 990.4,387.0 984.8,386.7" fill="#c4c4c4"/>
<polygon points="1009.7,376.9 1007.3,387.9 1007.3,393.8 1009.7,382.7" fill="#222222"/>
<polygon points="990.4,387.0 1007.3,387.9 1007.3,393.8 990.4,392.8" fill="#2e2e2e"/>
<polygon points="992.9,376.1 1009.7,376.9 1007.3,387.9 990.4,387.0" fill="#3b3b3b"/>
<polygon points="1015.3,377.2 1012.9,388.2 1012.9,394.1 1015.3,383.0" fill="#7e7e7e"/>
<polygon points="1007.3,387.9 1012.9,388.2 1012.9,394.1 1007.3,393.8" fill="#9c9c9c"/>
<polygon points="1009.7,376.9 1015.3,377.2 1012.9,388.2 1007.3,387.9" fill="#c4c4c4"/>
<polygon points="789.2,357.0 806.9,357.9 804.2,366.7 786.4,365.8" fill="#6e6e6e"/>
<polygon points="783.5,375.2 801.4,376.2 798.6,385.2 780.7,384.1" fill="#6e6e6e"/>
<polygon points="804.0,356.3 803.1,359.0 803.1,364.4 804.0,361.7" fill="#7e7e7e"/>
<polygon points="788.9,358.2 803.1,359.0 803.1,364.4 788.9,363.6" fill="#9c9c9c"/>
<polygon points="789.8,355.5 804.0,356.3 803.1,359.0 788.9,358.2" fill="#c4c4c4"/>
<polygon points="803.1,359.0 799.2,371.8 799.2,377.2 803.1,364.4" fill="#222222"/>
<polygon points="785.0,371.0 799.2,371.8 799.2,377.2 785.0,376.4" fill="#2e2e2e"/>
<polygon points="788.9,358.2 803.1,359.0 799.2,371.8 785.0,371.0" fill="#3b3b3b"/>
<polygon points="799.2,371.8 798.0,375.7 798.0,381.1 799.2,377.2" fill="#7e7e7e"/>
<polygon points="783.7,374.9 798.0,375.7 798.0,381.1 783.7,380.3" fill="#9c9c9c"/>
<polygon points="785.0,371.0 799.2,371.8 798.0,375.7 783.7,374.9" fill="#c4c4c4"/>
<polygon points="823.5,361.0 841.5,362.0 838.8,371.3 820.8,370.3" fill="#6e6e6e"/>
<polygon points="818.2,379.0 836.3,380.0 833.5,389.4 815.4,388.4" fill="#6e6e6e"/>
<polygon points="838.5,355.4 837.7,358.4 837.7,368.8 838.5,365.8" fill="#7e7e7e"/>
<polygon points="823.3,357.6 837.7,358.4 837.7,368.8 823.3,368.0" fill="#9c9c9c"/>
<polygon points="824.2,354.7 838.5,355.4 837.7,358.4 823.3,357.6" fill="#c4c4c4"/>
<polygon points="837.7,358.4 834.1,370.6 834.1,381.0 837.7,368.8" fill="#4a3505"/>
<polygon points="819.7,369.8 834.1,370.6 834.1,381.0 819.7,380.2" fill="#6b4d08"/>
<polygon points="823.3,357.6 837.7,358.4 834.1,370.6 819.7,369.8" fill="#8a6612"/>
<polygon points="834.1,370.6 832.9,374.9 832.9,385.4 834.1,381.0" fill="#7e7e7e"/>
<polygon points="818.4,374.2 832.9,374.9 832.9,385.4 818.4,384.6" fill="#9c9c9c"/>
<polygon points="819.7,369.8 834.1,370.6 832.9,374.9 818.4,374.2" fill="#c4c4c4"/>
<polygon points="850.7,360.5 860.6,361.0 858.4,368.8 848.5,368.3" fill="#6e6e6e"/>
<polygon points="859.9,360.6 858.3,366.1 858.3,367.7 859.9,362.1" fill="#8a8a8a"/>
<polygon points="854.1,365.9 858.3,366.1 858.3,367.7 854.1,367.4" fill="#9a9a9a"/>
<polygon points="855.7,360.3 859.9,360.6 858.3,366.1 854.1,365.9" fill="#bdbdbd"/>
<polygon points="864.1,355.7 859.9,360.8 858.3,366.3 862.5,361.3" fill="#a8a8a8"/>
<polygon points="847.5,371.6 857.4,372.2 855.2,380.0 845.3,379.5" fill="#6e6e6e"/>
<polygon points="856.7,371.7 855.1,377.3 855.1,378.9 856.7,373.3" fill="#8a8a8a"/>
<polygon points="850.9,377.1 855.1,377.3 855.1,378.9 850.9,378.7" fill="#9a9a9a"/>
<polygon points="852.5,371.5 856.7,371.7 855.1,377.3 850.9,377.1" fill="#bdbdbd"/>
<polygon points="860.9,366.9 856.7,371.9 855.1,377.6 859.4,372.5" fill="#a8a8a8"/>
<polygon points="844.3,382.9 854.3,383.4 852.0,391.4 842.0,390.8" fill="#6e6e6e"/>
<polygon points="853.6,383.0 852.0,388.7 852.0,390.2 853.6,384.5" fill="#8a8a8a"/>
<polygon points="847.7,388.4 852.0,388.7 852.0,390.2 847.7,390.0" fill="#9a9a9a"/>
<polygon points="849.3,382.8 853.6,383.0 852.0,388.7 847.7,388.4" fill="#bdbdbd"/>
<polygon points="857.8,378.1 853.6,383.2 852.0,388.9 856.2,383.8" fill="#a8a8a8"/>
<polygon points="893.3,347.7 883.9,382.6 883.9,394.6 893.3,359.6" fill="#1f1f1f"/>
<polygon points="855.2,381.1 883.9,382.6 883.9,394.6 855.2,393.0" fill="#303030"/>
<polygon points="865.0,346.4 893.3,347.7 883.9,382.6 855.2,381.1" fill="#3a3a3a"/>
<polygon points="896.4,363.5 913.4,364.3 911.3,372.2 894.3,371.3" fill="#6e6e6e"/>
<polygon points="892.2,357.7 899.9,363.4 898.5,369.1 890.7,363.3" fill="#acacac"/>
<polygon points="907.7,363.6 906.2,369.2 906.2,370.8 907.7,365.2" fill="#868686"/>
<polygon points="898.5,368.8 906.2,369.2 906.2,370.8 898.5,370.4" fill="#9a9a9a"/>
<polygon points="899.9,363.2 907.7,363.6 906.2,369.2 898.5,368.8" fill="#c2c2c2"/>
<polygon points="890.7,384.9 907.8,385.9 905.7,393.9 888.5,392.9" fill="#6e6e6e"/>
<polygon points="886.5,379.1 894.3,384.9 892.7,390.6 885.0,384.8" fill="#acacac"/>
<polygon points="902.0,385.1 900.5,390.8 900.5,392.4 902.0,386.7" fill="#868686"/>
<polygon points="892.7,390.4 900.5,390.8 900.5,392.4 892.7,392.0" fill="#9a9a9a"/>
<polygon points="894.3,384.7 902.0,385.1 900.5,390.8 892.7,390.4" fill="#c2c2c2"/>
<polygon points="840.5,401.7 850.5,402.3 848.2,410.4 838.2,409.8" fill="#6e6e6e"/>
<polygon points="849.8,401.9 848.2,407.7 848.2,409.2 849.8,403.5" fill="#8a8a8a"/>
<polygon points="843.9,407.4 848.2,407.7 848.2,409.2 843.9,409.0" fill="#9a9a9a"/>
<polygon points="845.5,401.7 849.8,401.9 848.2,407.7 843.9,407.4" fill="#bdbdbd"/>
<polygon points="854.1,397.0 849.8,402.1 848.2,407.9 852.4,402.8" fill="#a8a8a8"/>
<polygon points="837.2,413.3 847.3,413.9 845.0,422.0 834.9,421.4" fill="#6e6e6e"/>
<polygon points="846.6,413.5 844.9,419.3 844.9,420.8 846.6,415.0" fill="#8a8a8a"/>
<polygon points="840.6,419.0 844.9,419.3 844.9,420.8 840.6,420.6" fill="#9a9a9a"/>
<polygon points="842.3,413.2 846.6,413.5 844.9,419.3 840.6,419.0" fill="#bdbdbd"/>
<polygon points="850.8,408.6 846.6,413.7 844.9,419.5 849.2,414.4" fill="#a8a8a8"/>
<polygon points="833.9,424.9 844.0,425.5 841.7,433.8 831.5,433.1" fill="#6e6e6e"/>
<polygon points="843.3,425.1 841.6,431.0 841.6,432.6 843.3,426.7" fill="#8a8a8a"/>
<polygon points="837.3,430.7 841.6,431.0 841.6,432.6 837.3,432.3" fill="#9a9a9a"/>
<polygon points="839.0,424.8 843.3,425.1 841.6,431.0 837.3,430.7" fill="#bdbdbd"/>
<polygon points="847.6,420.2 843.3,425.3 841.6,431.2 845.9,426.1" fill="#a8a8a8"/>
<polygon points="883.6,389.6 874.2,424.6 874.2,436.8 883.6,401.6" fill="#1f1f1f"/>
<polygon points="845.1,422.8 874.2,424.6 874.2,436.8 845.1,434.9" fill="#303030"/>
<polygon points="854.9,388.0 883.6,389.6 874.2,424.6 845.1,422.8" fill="#3a3a3a"/>
<polygon points="886.9,405.1 904.1,406.1 902.0,414.3 884.7,413.2" fill="#6e6e6e"/>
<polygon points="882.7,399.2 890.5,405.1 889.0,410.9 881.1,405.0" fill="#acacac"/>
<polygon points="898.3,405.4 896.8,411.2 896.8,412.8 898.3,406.9" fill="#868686"/>
<polygon points="889.0,410.7 896.8,411.2 896.8,412.8 889.0,412.3" fill="#9a9a9a"/>
<polygon points="890.5,404.9 898.3,405.4 896.8,411.2 889.0,410.7" fill="#c2c2c2"/>
<polygon points="881.0,427.3 898.4,428.4 896.2,436.7 878.8,435.6" fill="#6e6e6e"/>
<polygon points="876.7,421.4 884.6,427.3 883.1,433.3 875.2,427.3" fill="#acacac"/>
<polygon points="892.5,427.6 891.0,433.5 891.0,435.1 892.5,429.2" fill="#868686"/>
<polygon points="883.1,433.0 891.0,433.5 891.0,435.1 883.1,434.6" fill="#9a9a9a"/>
<polygon points="884.6,427.1 892.5,427.6 891.0,433.5 883.1,433.0" fill="#c2c2c2"/>
<polygon points="931.2,388.9 947.0,389.8 943.1,406.1 927.2,405.1" fill="#8a8a8a"/>
<polygon points="963.7,363.2 961.1,374.0 961.1,391.2 963.7,380.3" fill="#242424"/>
<polygon points="910.7,371.4 961.1,374.0 961.1,391.2 910.7,388.3" fill="#383838"/>
<polygon points="913.5,360.7 963.7,363.2 961.1,374.0 910.7,371.4" fill="#3a3a3a"/>
<polygon points="944.5,387.4 941.8,398.4 941.8,401.3 944.5,390.3" fill="#808080"/>
<polygon points="930.7,397.8 941.8,398.4 941.8,401.3 930.7,400.6" fill="#909090"/>
<polygon points="933.5,386.8 944.5,387.4 941.8,398.4 930.7,397.8" fill="#b0b0b0"/>
<polygon points="904.6,410.0 919.7,410.9 915.5,427.9 900.3,426.9" fill="#6e6e6e"/>
<polygon points="937.0,412.0 952.3,412.9 948.2,429.9 932.8,429.0" fill="#6e6e6e"/>
<polygon points="917.8,400.8 914.2,414.9 914.2,426.4 917.8,412.3" fill="#7e7e7e"/>
<polygon points="906.2,414.4 914.2,414.9 914.2,426.4 906.2,425.9" fill="#9c9c9c"/>
<polygon points="909.8,400.4 917.8,400.8 914.2,414.9 906.2,414.4" fill="#c4c4c4"/>
<polygon points="938.3,402.0 934.8,416.1 934.8,427.6 938.3,413.5" fill="#4a3505"/>
<polygon points="914.2,414.9 934.8,416.1 934.8,427.6 914.2,426.4" fill="#6b4d08"/>
<polygon points="917.8,400.8 938.3,402.0 934.8,416.1 914.2,414.9" fill="#8a6612"/>
<polygon points="946.3,402.4 942.9,416.6 942.9,428.2 946.3,414.0" fill="#7e7e7e"/>
<polygon points="934.8,416.1 942.9,416.6 942.9,428.2 934.8,427.6" fill="#9c9c9c"/>
<polygon points="938.3,402.0 946.3,402.4 942.9,416.6 934.8,416.1" fill="#c4c4c4"/>
<polygon points="900.4,428.9 915.6,429.8 911.3,447.0 896.0,446.0" fill="#6e6e6e"/>
<polygon points="933.0,430.9 948.4,431.9 944.3,449.2 928.8,448.2" fill="#6e6e6e"/>
<polygon points="913.7,419.6 910.1,433.9 910.1,445.5 913.7,431.1" fill="#7e7e7e"/>
<polygon points="902.0,433.4 910.1,433.9 910.1,445.5 902.0,444.9" fill="#9c9c9c"/>
<polygon points="905.6,419.2 913.7,419.6 910.1,433.9 902.0,433.4" fill="#c4c4c4"/>
<polygon points="934.3,420.9 930.8,435.2 930.8,446.8 934.3,432.4" fill="#4a3505"/>
<polygon points="910.1,433.9 930.8,435.2 930.8,446.8 910.1,445.5" fill="#6b4d08"/>
<polygon points="913.7,419.6 934.3,420.9 930.8,435.2 910.1,433.9" fill="#8a6612"/>
<polygon points="942.4,421.4 938.9,435.7 938.9,447.4 942.4,433.0" fill="#7e7e7e"/>
<polygon points="930.8,435.2 938.9,435.7 938.9,447.4 930.8,446.8" fill="#9c9c9c"/>
<polygon points="934.3,420.9 942.4,421.4 938.9,435.7 930.8,435.2" fill="#c4c4c4"/>
<polygon points="421.6,384.8 437.7,385.8 433.8,394.4 417.7,393.4" fill="#6e6e6e"/>
<polygon points="413.5,402.6 429.7,403.6 425.7,412.3 409.5,411.3" fill="#6e6e6e"/>
<polygon points="434.3,384.6 433.2,387.2 433.2,392.1 434.3,389.5" fill="#7e7e7e"/>
<polygon points="420.3,386.4 433.2,387.2 433.2,392.1 420.3,391.3" fill="#9c9c9c"/>
<polygon points="421.5,383.8 434.3,384.6 433.2,387.2 420.3,386.4" fill="#c4c4c4"/>
<polygon points="433.2,387.2 427.5,399.7 427.5,404.6 433.2,392.1" fill="#222222"/>
<polygon points="414.6,398.9 427.5,399.7 427.5,404.6 414.6,403.8" fill="#2e2e2e"/>
<polygon points="420.3,386.4 433.2,387.2 427.5,399.7 414.6,398.9" fill="#3b3b3b"/>
<polygon points="427.5,399.7 425.8,403.5 425.8,408.4 427.5,404.6" fill="#7e7e7e"/>
<polygon points="412.9,402.7 425.8,403.5 425.8,408.4 412.9,407.6" fill="#9c9c9c"/>
<polygon points="414.6,398.9 427.5,399.7 425.8,403.5 412.9,402.7" fill="#c4c4c4"/>
<polygon points="444.7,385.7 460.9,386.7 457.1,395.3 440.8,394.3" fill="#6e6e6e"/>
<polygon points="436.7,403.5 453.0,404.5 449.2,413.3 432.8,412.2" fill="#6e6e6e"/>
<polygon points="457.6,385.4 456.4,388.0 456.4,393.0 457.6,390.3" fill="#7e7e7e"/>
<polygon points="443.4,387.3 456.4,388.0 456.4,393.0 443.4,392.2" fill="#9c9c9c"/>
<polygon points="444.6,384.6 457.6,385.4 456.4,388.0 443.4,387.3" fill="#c4c4c4"/>
<polygon points="456.4,388.0 450.9,400.6 450.9,405.5 456.4,393.0" fill="#222222"/>
<polygon points="437.9,399.8 450.9,400.6 450.9,405.5 437.9,404.7" fill="#2e2e2e"/>
<polygon points="443.4,387.3 456.4,388.0 450.9,400.6 437.9,399.8" fill="#3b3b3b"/>
<polygon points="450.9,400.6 449.2,404.4 449.2,409.3 450.9,405.5" fill="#7e7e7e"/>
<polygon points="436.2,403.6 449.2,404.4 449.2,409.3 436.2,408.5" fill="#9c9c9c"/>
<polygon points="437.9,399.8 450.9,400.6 449.2,404.4 436.2,403.6" fill="#c4c4c4"/>
<polygon points="475.7,391.2 483.3,391.6 480.0,399.2 472.4,398.8" fill="#6e6e6e"/>
<polygon points="483.1,391.3 480.8,396.8 480.8,398.2 483.1,392.7" fill="#8a8a8a"/>
<polygon points="477.7,396.6 480.8,396.8 480.8,398.2 477.7,398.0" fill="#9a9a9a"/>
<polygon points="480.0,391.1 483.1,391.3 480.8,396.8 477.7,396.6" fill="#bdbdbd"/>
<polygon points="486.2,386.9 483.1,391.5 480.8,397.0 483.9,392.4" fill="#a8a8a8"/>
<polygon points="515.7,368.8 501.5,402.5 501.5,413.3 515.7,379.5" fill="#1f1f1f"/>
<polygon points="477.8,401.1 501.5,402.5 501.5,413.3 477.8,411.8" fill="#303030"/>
<polygon points="492.3,367.5 515.7,368.8 501.5,402.5 477.8,401.1" fill="#3a3a3a"/>
<polygon points="518.3,382.6 531.5,383.4 528.3,391.0 515.1,390.2" fill="#6e6e6e"/>
<polygon points="514.3,377.5 520.2,382.7 518.0,388.1 512.1,382.9" fill="#acacac"/>
<polygon points="526.1,382.8 523.9,388.2 523.9,389.6 526.1,384.2" fill="#868686"/>
<polygon points="518.0,387.9 523.9,388.2 523.9,389.6 518.0,389.3" fill="#9a9a9a"/>
<polygon points="520.2,382.5 526.1,382.8 523.9,388.2 518.0,387.9" fill="#c2c2c2"/>
<polygon points="509.2,404.4 522.5,405.3 519.3,413.0 505.9,412.1" fill="#6e6e6e"/>
<polygon points="505.2,399.3 511.1,404.5 508.8,410.0 502.9,404.8" fill="#acacac"/>
<polygon points="517.1,404.6 514.8,410.2 514.8,411.6 517.1,406.1" fill="#868686"/>
<polygon points="508.8,409.8 514.8,410.2 514.8,411.6 508.8,411.2" fill="#9a9a9a"/>
<polygon points="511.1,404.3 517.1,404.6 514.8,410.2 508.8,409.8" fill="#c2c2c2"/>
<polygon points="539.0,384.7 555.7,385.7 552.2,394.4 535.4,393.4" fill="#6e6e6e"/>
<polygon points="531.6,402.7 548.4,403.8 544.8,412.7 528.0,411.6" fill="#6e6e6e"/>
<polygon points="552.5,384.3 551.4,387.0 551.4,392.1 552.5,389.4" fill="#7e7e7e"/>
<polygon points="538.0,386.2 551.4,387.0 551.4,392.1 538.0,391.3" fill="#9c9c9c"/>
<polygon points="539.1,383.6 552.5,384.3 551.4,387.0 538.0,386.2" fill="#c4c4c4"/>
<polygon points="551.4,387.0 546.3,399.7 546.3,404.8 551.4,392.1" fill="#222222"/>
<polygon points="532.9,398.9 546.3,399.7 546.3,404.8 532.9,403.9" fill="#2e2e2e"/>
<polygon points="538.0,386.2 551.4,387.0 546.3,399.7 532.9,398.9" fill="#3b3b3b"/>
<polygon points="546.3,399.7 544.7,403.6 544.7,408.7 546.3,404.8" fill="#7e7e7e"/>
<polygon points="531.3,402.7 544.7,403.6 544.7,408.7 531.3,407.8" fill="#9c9c9c"/>
<polygon points="532.9,398.9 546.3,399.7 544.7,403.6 531.3,402.7" fill="#c4c4c4"/>
<polygon points="564.9,384.3 574.8,384.9 571.8,392.5 561.9,391.9" fill="#6e6e6e"/>
<polygon points="573.7,384.5 571.5,390.0 571.5,391.4 573.7,385.9" fill="#8a8a8a"/>
<polygon points="567.3,389.7 571.5,390.0 571.5,391.4 567.3,391.1" fill="#9a9a9a"/>
<polygon points="569.4,384.2 573.7,384.5 571.5,390.0 567.3,389.7" fill="#bdbdbd"/>
<polygon points="577.9,380.1 573.7,384.7 571.5,390.2 575.8,385.5" fill="#a8a8a8"/>
<polygon points="556.2,406.3 566.1,406.9 563.1,414.7 553.1,414.0" fill="#6e6e6e"/>
<polygon points="565.0,406.5 562.8,412.1 562.8,413.5 565.0,407.9" fill="#8a8a8a"/>
<polygon points="558.5,411.8 562.8,412.1 562.8,413.5 558.5,413.2" fill="#9a9a9a"/>
<polygon points="560.7,406.2 565.0,406.5 562.8,412.1 558.5,411.8" fill="#bdbdbd"/>
<polygon points="569.3,402.0 565.0,406.7 562.8,412.3 567.1,407.6" fill="#a8a8a8"/>
<polygon points="606.0,373.2 593.3,406.4 593.3,417.5 606.0,384.2" fill="#1f1f1f"/>
<polygon points="566.0,404.7 593.3,406.4 593.3,417.5 566.0,415.8" fill="#303030"/>
<polygon points="579.0,371.7 606.0,373.2 593.3,406.4 566.0,404.7" fill="#3a3a3a"/>
<polygon points="608.9,386.9 625.4,387.9 622.5,395.6 606.0,394.6" fill="#6e6e6e"/>
<polygon points="604.9,381.6 612.4,387.0 610.3,392.5 602.8,387.1" fill="#acacac"/>
<polygon points="619.9,387.2 617.9,392.7 617.9,394.2 619.9,388.7" fill="#868686"/>
<polygon points="610.3,392.3 617.9,392.7 617.9,394.2 610.3,393.7" fill="#9a9a9a"/>
<polygon points="612.4,386.8 619.9,387.2 617.9,392.7 610.3,392.3" fill="#c2c2c2"/>
<polygon points="604.7,397.9 621.2,398.9 618.3,406.7 601.8,405.7" fill="#6e6e6e"/>
<polygon points="600.7,392.6 608.2,398.0 606.1,403.6 598.6,398.1" fill="#acacac"/>
<polygon points="615.8,398.3 613.7,403.8 613.7,405.3 615.8,399.7" fill="#868686"/>
<polygon points="606.1,403.4 613.7,403.8 613.7,405.3 606.1,404.8" fill="#9a9a9a"/>
<polygon points="608.2,397.8 615.8,398.3 613.7,403.8 606.1,403.4" fill="#c2c2c2"/>
<polygon points="600.5,409.0 617.1,410.1 614.1,418.0 597.5,416.9" fill="#6e6e6e"/>
<polygon points="596.5,403.7 604.0,409.2 601.9,414.8 594.3,409.3" fill="#acacac"/>
<polygon points="611.6,409.4 609.5,415.0 609.5,416.5 611.6,410.9" fill="#868686"/>
<polygon points="601.9,414.6 609.5,415.0 609.5,416.5 601.9,416.0" fill="#9a9a9a"/>
<polygon points="604.0,409.0 611.6,409.4 609.5,415.0 601.9,414.6" fill="#c2c2c2"/>
<polygon points="811.0,404.4 829.2,405.5 826.5,415.1 808.1,414.0" fill="#6e6e6e"/>
<polygon points="805.5,423.0 823.8,424.2 821.0,433.9 802.6,432.7" fill="#6e6e6e"/>
<polygon points="826.2,398.8 825.3,401.9 825.3,412.5 826.2,409.4" fill="#7e7e7e"/>
<polygon points="810.7,401.1 825.3,401.9 825.3,412.5 810.7,411.6" fill="#9c9c9c"/>
<polygon points="811.6,398.0 826.2,398.8 825.3,401.9 810.7,401.1" fill="#c4c4c4"/>
<polygon points="825.3,401.9 821.6,414.6 821.6,425.2 825.3,412.5" fill="#4a3505"/>
<polygon points="807.0,413.7 821.6,414.6 821.6,425.2 807.0,424.3" fill="#6b4d08"/>
<polygon points="810.7,401.1 825.3,401.9 821.6,414.6 807.0,413.7" fill="#8a6612"/>
<polygon points="821.6,414.6 820.3,419.1 820.3,429.7 821.6,425.2" fill="#7e7e7e"/>
<polygon points="805.6,418.2 820.3,419.1 820.3,429.7 805.6,428.8" fill="#9c9c9c"/>
<polygon points="807.0,413.7 821.6,414.6 820.3,419.1 805.6,418.2" fill="#c4c4c4"/>
<polygon points="731.0,415.8 744.8,416.7 739.8,432.2 726.0,431.3" fill="#6e6e6e"/>
<polygon points="759.5,417.6 773.4,418.5 768.6,434.1 754.6,433.1" fill="#6e6e6e"/>
<polygon points="742.8,407.7 738.7,420.3 738.7,430.7 742.8,418.0" fill="#7e7e7e"/>
<polygon points="731.7,419.9 738.7,420.3 738.7,430.7 731.7,430.2" fill="#9c9c9c"/>
<polygon points="735.9,407.2 742.8,407.7 738.7,420.3 731.7,419.9" fill="#c4c4c4"/>
<polygon points="760.6,408.7 756.6,421.4 756.6,431.8 760.6,419.1" fill="#4a3505"/>
<polygon points="738.7,420.3 756.6,421.4 756.6,431.8 738.7,430.7" fill="#6b4d08"/>
<polygon points="742.8,407.7 760.6,408.7 756.6,421.4 738.7,420.3" fill="#8a6612"/>
<polygon points="767.6,409.1 763.6,421.8 763.6,432.3 767.6,419.5" fill="#7e7e7e"/>
<polygon points="756.6,421.4 763.6,421.8 763.6,432.3 756.6,431.8" fill="#9c9c9c"/>
<polygon points="760.6,408.7 767.6,409.1 763.6,421.8 756.6,421.4" fill="#c4c4c4"/>
<polygon points="454.5,432.2 467.5,433.1 460.6,449.3 447.5,448.4" fill="#6e6e6e"/>
<polygon points="482.0,434.0 495.1,434.9 488.3,451.3 475.1,450.3" fill="#6e6e6e"/>
<polygon points="465.5,424.2 459.7,437.7 459.7,447.8 465.5,434.3" fill="#7e7e7e"/>
<polygon points="452.9,437.2 459.7,437.7 459.7,447.8 452.9,447.3" fill="#9c9c9c"/>
<polygon points="458.8,423.8 465.5,424.2 459.7,437.7 452.9,437.2" fill="#c4c4c4"/>
<polygon points="482.8,425.3 477.1,438.9 477.1,449.1 482.8,435.5" fill="#4a3505"/>
<polygon points="459.7,437.7 477.1,438.9 477.1,449.1 459.7,447.8" fill="#6b4d08"/>
<polygon points="465.5,424.2 482.8,425.3 477.1,438.9 459.7,437.7" fill="#8a6612"/>
<polygon points="489.6,425.8 483.9,439.3 483.9,449.5 489.6,436.0" fill="#7e7e7e"/>
<polygon points="477.1,438.9 483.9,439.3 483.9,449.5 477.1,449.1" fill="#9c9c9c"/>
<polygon points="482.8,425.3 489.6,425.8 483.9,439.3 477.1,438.9" fill="#c4c4c4"/>
<polygon points="450.4,452.0 462.9,452.9 456.3,468.2 443.8,467.3" fill="#6e6e6e"/>
<polygon points="475.9,453.8 488.5,454.7 482.0,470.1 469.4,469.2" fill="#6e6e6e"/>
<polygon points="460.9,444.0 455.5,456.5 455.5,466.7 460.9,454.1" fill="#7e7e7e"/>
<polygon points="449.3,456.1 455.5,456.5 455.5,466.7 449.3,466.3" fill="#9c9c9c"/>
<polygon points="454.7,443.5 460.9,444.0 455.5,456.5 449.3,456.1" fill="#c4c4c4"/>
<polygon points="476.7,445.0 471.4,457.6 471.4,467.9 476.7,455.3" fill="#4a3505"/>
<polygon points="455.5,456.5 471.4,457.6 471.4,467.9 455.5,466.7" fill="#6b4d08"/>
<polygon points="460.9,444.0 476.7,445.0 471.4,457.6 455.5,456.5" fill="#8a6612"/>
<polygon points="482.9,445.5 477.6,458.1 477.6,468.4 482.9,455.7" fill="#7e7e7e"/>
<polygon points="471.4,457.6 477.6,458.1 477.6,468.4 471.4,467.9" fill="#9c9c9c"/>
<polygon points="476.7,445.0 482.9,445.5 477.6,458.1 471.4,457.6" fill="#c4c4c4"/>
<polygon points="506.7,424.2 516.6,424.8 513.3,432.7 503.4,432.0" fill="#6e6e6e"/>
<polygon points="515.4,424.5 513.1,430.1 513.1,431.5 515.4,425.9" fill="#8a8a8a"/>
<polygon points="508.8,429.8 513.1,430.1 513.1,431.5 508.8,431.2" fill="#9a9a9a"/>
<polygon points="511.2,424.2 515.4,424.5 513.1,430.1 508.8,429.8" fill="#bdbdbd"/>
<polygon points="519.6,420.1 515.4,424.7 513.1,430.3 517.3,425.7" fill="#a8a8a8"/>
<polygon points="497.3,446.7 507.3,447.4 504.0,455.4 494.0,454.7" fill="#6e6e6e"/>
<polygon points="506.1,447.1 503.7,452.8 503.7,454.3 506.1,448.5" fill="#8a8a8a"/>
<polygon points="499.5,452.5 503.7,452.8 503.7,454.3 499.5,453.9" fill="#9a9a9a"/>
<polygon points="501.8,446.8 506.1,447.1 503.7,452.8 499.5,452.5" fill="#bdbdbd"/>
<polygon points="510.4,442.7 506.1,447.3 503.7,453.0 508.0,448.4" fill="#a8a8a8"/>
<polygon points="547.8,413.3 534.1,447.4 534.1,458.6 547.8,424.4" fill="#1f1f1f"/>
<polygon points="506.9,445.6 534.1,447.4 534.1,458.6 506.9,456.6" fill="#303030"/>
<polygon points="520.8,411.7 547.8,413.3 534.1,447.4 506.9,445.6" fill="#3a3a3a"/>
<polygon points="550.7,427.1 567.2,428.2 564.1,436.1 547.5,435.0" fill="#6e6e6e"/>
<polygon points="546.7,421.8 554.2,427.3 551.9,432.9 544.4,427.5" fill="#acacac"/>
<polygon points="561.7,427.6 559.5,433.2 559.5,434.7 561.7,429.0" fill="#868686"/>
<polygon points="551.9,432.7 559.5,433.2 559.5,434.7 551.9,434.2" fill="#9a9a9a"/>
<polygon points="554.2,427.1 561.7,427.6 559.5,433.2 551.9,432.7" fill="#c2c2c2"/>
<polygon points="546.2,438.4 562.7,439.6 559.6,447.6 543.0,446.4" fill="#6e6e6e"/>
<polygon points="542.1,433.1 549.7,438.6 547.4,444.3 539.9,438.8" fill="#acacac"/>
<polygon points="557.2,438.9 555.0,444.6 555.0,446.1 557.2,440.4" fill="#868686"/>
<polygon points="547.4,444.1 555.0,444.6 555.0,446.1 547.4,445.6" fill="#9a9a9a"/>
<polygon points="549.7,438.4 557.2,438.9 555.0,444.6 547.4,444.1" fill="#c2c2c2"/>
<polygon points="541.6,449.9 558.2,451.0 555.1,459.1 538.4,457.9" fill="#6e6e6e"/>
<polygon points="537.6,444.5 545.1,450.0 542.9,455.8 535.3,450.3" fill="#acacac"/>
<polygon points="552.7,450.4 550.5,456.1 550.5,457.6 552.7,451.8" fill="#868686"/>
<polygon points="542.9,455.6 550.5,456.1 550.5,457.6 542.9,457.0" fill="#9a9a9a"/>
<polygon points="545.1,449.8 552.7,450.4 550.5,456.1 542.9,455.6" fill="#c2c2c2"/>
<polygon points="584.3,433.7 601.6,434.9 598.0,444.5 580.7,443.3" fill="#6e6e6e"/>
<polygon points="577.2,452.2 594.6,453.5 591.0,463.2 573.5,461.9" fill="#6e6e6e"/>
<polygon points="598.4,428.8 597.2,431.9 597.2,441.9 598.4,438.8" fill="#7e7e7e"/>
<polygon points="583.4,431.0 597.2,431.9 597.2,441.9 583.4,440.9" fill="#9c9c9c"/>
<polygon points="584.6,427.9 598.4,428.8 597.2,431.9 583.4,431.0" fill="#c4c4c4"/>
<polygon points="597.2,431.9 592.4,444.5 592.4,454.5 597.2,441.9" fill="#4a3505"/>
<polygon points="578.6,443.5 592.4,444.5 592.4,454.5 578.6,453.5" fill="#6b4d08"/>
<polygon points="583.4,431.0 597.2,431.9 592.4,444.5 578.6,443.5" fill="#8a6612"/>
<polygon points="592.4,444.5 590.8,448.9 590.8,459.0 592.4,454.5" fill="#7e7e7e"/>
<polygon points="576.9,448.0 590.8,448.9 590.8,459.0 576.9,458.0" fill="#9c9c9c"/>
<polygon points="578.6,443.5 592.4,444.5 590.8,448.9 576.9,448.0" fill="#c4c4c4"/>
<polygon points="648.0,431.5 665.6,432.7 662.3,442.3 644.6,441.1" fill="#6e6e6e"/>
<polygon points="641.4,450.2 659.1,451.4 655.7,461.2 637.9,459.9" fill="#6e6e6e"/>
<polygon points="662.5,426.4 661.4,429.5 661.4,439.7 662.5,436.6" fill="#7e7e7e"/>
<polygon points="647.3,428.6 661.4,429.5 661.4,439.7 647.3,438.8" fill="#9c9c9c"/>
<polygon points="648.4,425.5 662.5,426.4 661.4,429.5 647.3,428.6" fill="#c4c4c4"/>
<polygon points="661.4,429.5 656.9,442.2 656.9,452.4 661.4,439.7" fill="#4a3505"/>
<polygon points="642.7,441.3 656.9,442.2 656.9,452.4 642.7,451.5" fill="#6b4d08"/>
<polygon points="647.3,428.6 661.4,429.5 656.9,442.2 642.7,441.3" fill="#8a6612"/>
<polygon points="656.9,442.2 655.3,446.7 655.3,457.0 656.9,452.4" fill="#7e7e7e"/>
<polygon points="641.1,445.8 655.3,446.7 655.3,457.0 641.1,456.0" fill="#9c9c9c"/>
<polygon points="642.7,441.3 656.9,442.2 655.3,446.7 641.1,445.8" fill="#c4c4c4"/>
<polygon points="674.4,433.6 692.2,434.8 688.9,444.5 671.1,443.3" fill="#6e6e6e"/>
<polygon points="667.9,452.4 685.8,453.6 682.5,463.5 664.5,462.2" fill="#6e6e6e"/>
<polygon points="689.0,428.5 688.0,431.6 688.0,441.9 689.0,438.7" fill="#7e7e7e"/>
<polygon points="673.7,430.7 688.0,431.6 688.0,441.9 673.7,440.9" fill="#9c9c9c"/>
<polygon points="674.8,427.6 689.0,428.5 688.0,431.6 673.7,430.7" fill="#c4c4c4"/>
<polygon points="688.0,431.6 683.6,444.3 683.6,454.7 688.0,441.9" fill="#4a3505"/>
<polygon points="669.3,443.4 683.6,444.3 683.6,454.7 669.3,453.7" fill="#6b4d08"/>
<polygon points="673.7,430.7 688.0,431.6 683.6,444.3 669.3,443.4" fill="#8a6612"/>
<polygon points="683.6,444.3 682.1,448.8 682.1,459.2 683.6,454.7" fill="#7e7e7e"/>
<polygon points="667.8,447.9 682.1,448.8 682.1,459.2 667.8,458.2" fill="#9c9c9c"/>
<polygon points="669.3,443.4 683.6,444.3 682.1,448.8 667.8,447.9" fill="#c4c4c4"/>
<polygon points="789.5,459.0 808.1,460.3 805.2,470.4 786.6,469.0" fill="#6e6e6e"/>
<polygon points="783.7,478.5 802.4,479.8 799.5,490.0 780.7,488.7" fill="#6e6e6e"/>
<polygon points="805.0,453.6 804.1,456.9 804.1,467.6 805.0,464.4" fill="#7e7e7e"/>
<polygon points="789.2,455.9 804.1,456.9 804.1,467.6 789.2,466.6" fill="#9c9c9c"/>
<polygon points="790.2,452.7 805.0,453.6 804.1,456.9 789.2,455.9" fill="#c4c4c4"/>
<polygon points="804.1,456.9 800.2,470.1 800.2,480.9 804.1,467.6" fill="#4a3505"/>
<polygon points="785.3,469.1 800.2,470.1 800.2,480.9 785.3,479.8" fill="#6b4d08"/>
<polygon points="789.2,455.9 804.1,456.9 800.2,470.1 785.3,469.1" fill="#8a6612"/>
<polygon points="800.2,470.1 798.8,474.8 798.8,485.6 800.2,480.9" fill="#7e7e7e"/>
<polygon points="783.9,473.7 798.8,474.8 798.8,485.6 783.9,484.5" fill="#9c9c9c"/>
<polygon points="785.3,469.1 800.2,470.1 798.8,474.8 783.9,473.7" fill="#c4c4c4"/>
<polygon points="814.5,461.4 833.3,462.7 830.4,472.8 811.6,471.4" fill="#6e6e6e"/>
<polygon points="808.9,480.9 827.8,482.3 824.9,492.5 805.9,491.1" fill="#6e6e6e"/>
<polygon points="830.2,455.9 829.3,459.2 829.3,470.0 830.2,466.8" fill="#7e7e7e"/>
<polygon points="814.3,458.2 829.3,459.2 829.3,470.0 814.3,469.0" fill="#9c9c9c"/>
<polygon points="815.2,454.9 830.2,455.9 829.3,459.2 814.3,458.2" fill="#c4c4c4"/>
<polygon points="829.3,459.2 825.5,472.5 825.5,483.4 829.3,470.0" fill="#4a3505"/>
<polygon points="810.4,471.4 825.5,472.5 825.5,483.4 810.4,482.3" fill="#6b4d08"/>
<polygon points="814.3,458.2 829.3,459.2 825.5,472.5 810.4,471.4" fill="#8a6612"/>
<polygon points="825.5,472.5 824.2,477.2 824.2,488.1 825.5,483.4" fill="#7e7e7e"/>
<polygon points="809.1,476.1 824.2,477.2 824.2,488.1 809.1,487.0" fill="#9c9c9c"/>
<polygon points="810.4,471.4 825.5,472.5 824.2,477.2 809.1,476.1" fill="#c4c4c4"/>
<polygon points="840.3,463.5 859.2,464.8 856.4,475.0 837.5,473.6" fill="#6e6e6e"/>
<polygon points="834.8,483.2 853.8,484.5 851.0,494.9 832.0,493.4" fill="#6e6e6e"/>
<polygon points="856.1,458.0 855.2,461.3 855.2,472.2 856.1,468.9" fill="#7e7e7e"/>
<polygon points="840.1,460.3 855.2,461.3 855.2,472.2 840.1,471.1" fill="#9c9c9c"/>
<polygon points="841.0,457.0 856.1,458.0 855.2,461.3 840.1,460.3" fill="#c4c4c4"/>
<polygon points="855.2,461.3 851.6,474.6 851.6,485.6 855.2,472.2" fill="#4a3505"/>
<polygon points="836.4,473.6 851.6,474.6 851.6,485.6 836.4,484.5" fill="#6b4d08"/>
<polygon points="840.1,460.3 855.2,461.3 851.6,474.6 836.4,473.6" fill="#8a6612"/>
<polygon points="851.6,474.6 850.3,479.4 850.3,490.4 851.6,485.6" fill="#7e7e7e"/>
<polygon points="835.1,478.3 850.3,479.4 850.3,490.4 835.1,489.3" fill="#9c9c9c"/>
<polygon points="836.4,473.6 851.6,474.6 850.3,479.4 835.1,478.3" fill="#c4c4c4"/>
<polygon points="889.7,470.0 902.6,470.9 898.9,485.6 886.0,484.7" fill="#6e6e6e"/>
<polygon points="916.4,471.9 929.4,472.8 925.8,487.5 912.8,486.6" fill="#6e6e6e"/>
<polygon points="900.6,466.5 897.7,478.1 897.7,484.0 900.6,472.3" fill="#7e7e7e"/>
<polygon points="892.0,477.7 897.7,478.1 897.7,484.0 892.0,483.6" fill="#9c9c9c"/>
<polygon points="895.0,466.1 900.6,466.5 897.7,478.1 892.0,477.7" fill="#c4c4c4"/>
<polygon points="917.7,467.6 914.8,479.3 914.8,485.2 917.7,473.5" fill="#222222"/>
<polygon points="897.7,478.1 914.8,479.3 914.8,485.2 897.7,484.0" fill="#2e2e2e"/>
<polygon points="900.6,466.5 917.7,467.6 914.8,479.3 897.7,478.1" fill="#3b3b3b"/>
<polygon points="923.4,468.0 920.5,479.7 920.5,485.6 923.4,473.9" fill="#7e7e7e"/>
<polygon points="914.8,479.3 920.5,479.7 920.5,485.6 914.8,485.2" fill="#9c9c9c"/>
<polygon points="917.7,467.6 923.4,468.0 920.5,479.7 914.8,479.3" fill="#c4c4c4"/>
<polygon points="546.1,467.2 559.4,468.2 553.3,483.9 539.9,482.9" fill="#6e6e6e"/>
<polygon points="573.7,469.2 587.1,470.2 581.1,486.0 567.6,485.0" fill="#6e6e6e"/>
<polygon points="557.4,459.4 552.4,472.3 552.4,482.4 557.4,469.5" fill="#7e7e7e"/>
<polygon points="545.6,471.8 552.4,472.3 552.4,482.4 545.6,481.9" fill="#9c9c9c"/>
<polygon points="550.6,459.0 557.4,459.4 552.4,472.3 545.6,471.8" fill="#c4c4c4"/>
<polygon points="574.6,460.6 569.7,473.6 569.7,483.7 574.6,470.7" fill="#4a3505"/>
<polygon points="552.4,472.3 569.7,473.6 569.7,483.7 552.4,482.4" fill="#6b4d08"/>
<polygon points="557.4,459.4 574.6,460.6 569.7,473.6 552.4,472.3" fill="#8a6612"/>
<polygon points="581.4,461.1 576.5,474.1 576.5,484.2 581.4,471.2" fill="#7e7e7e"/>
<polygon points="569.7,473.6 576.5,474.1 576.5,484.2 569.7,483.7" fill="#9c9c9c"/>
<polygon points="574.6,460.6 581.4,461.1 576.5,474.1 569.7,473.6" fill="#c4c4c4"/>
<polygon points="610.4,464.6 625.2,465.7 617.7,486.3 602.8,485.2" fill="#6e6e6e"/>
<polygon points="643.1,467.0 658.1,468.1 650.9,488.8 635.8,487.7" fill="#6e6e6e"/>
<polygon points="623.2,454.1 616.8,471.8 616.8,484.8 623.2,467.0" fill="#7e7e7e"/>
<polygon points="608.5,471.3 616.8,471.8 616.8,484.8 608.5,484.2" fill="#9c9c9c"/>
<polygon points="615.0,453.6 623.2,454.1 616.8,471.8 608.5,471.3" fill="#c4c4c4"/>
<polygon points="644.1,455.6 637.8,473.3 637.8,486.4 644.1,468.5" fill="#4a3505"/>
<polygon points="616.8,471.8 637.8,473.3 637.8,486.4 616.8,484.8" fill="#6b4d08"/>
<polygon points="623.2,454.1 644.1,455.6 637.8,473.3 616.8,471.8" fill="#8a6612"/>
<polygon points="652.3,456.1 646.1,473.9 646.1,487.0 652.3,469.1" fill="#7e7e7e"/>
<polygon points="637.8,473.3 646.1,473.9 646.1,487.0 637.8,486.4" fill="#9c9c9c"/>
<polygon points="644.1,455.6 652.3,456.1 646.1,473.9 637.8,473.3" fill="#c4c4c4"/>
<polygon points="761.1,432.4 749.2,470.5 749.2,481.7 761.1,443.5" fill="#222222"/>
<polygon points="699.9,467.0 749.2,470.5 749.2,481.7 699.9,478.1" fill="#303030"/>
<polygon points="712.4,429.3 761.1,432.4 749.2,470.5 699.9,467.0" fill="#3a3a3a"/>
<polygon points="397.3,486.3 404.3,487.4 402.5,505.0 405.5,509.7 392.6,510.9 388.5,507.3" fill="#7a7a7a"/>
<polygon points="466.4,468.7 480.5,469.3 490.4,473.9 474.6,514.4 455.9,516.7 452.3,509.7 461.7,499.1 469.9,476.9" fill="#787878"/>
<polyline points="481.1,472.4 465.2,513.8" fill="none" stroke="#3a3a3a" stroke-width="1.20"/>
<defs><linearGradient id="gi" x1="0" y1="0" x2="0.3" y2="1"><stop offset="0" stop-color="#363636"/><stop offset="0.55" stop-color="#4a4a4a"/><stop offset="1" stop-color="#585858"/></linearGradient></defs>
<polygon points="404.3,487.4 446.5,490.9 457.0,467.5 464.1,468.1 468.8,472.2 469.9,479.2 461.7,499.1 457.0,506.2 450.0,510.3 410.2,510.9 404.3,508.5 402.5,505.0" fill="url(#gi)"/>
<polyline points="403.7,493.3 402.5,505.0 406.6,507.9" fill="none" stroke="#d8d8d8" stroke-width="0.80" stroke-dasharray="1.5 1.5"/>
<polyline points="406.6,513.4 451.2,517.3" fill="none" stroke="#e4e4e4" stroke-width="1.30"/>
<polyline points="460.0,463.4 465.8,463.8" fill="none" stroke="#e4e4e4" stroke-width="1.00"/>
<polygon points="462.9,444.1 465.2,446.4 449.4,488.6 446.5,490.9 447.1,485.1" fill="#4e4e4e"/>
<polygon points="388.5,481.6 447.1,485.1 446.5,490.9 389.6,486.3" fill="#7c7c7c"/>
<polygon points="406.6,440.3 462.9,444.1 447.1,485.1 388.5,481.6" fill="#6d6d6d"/>
<polygon points="556.7,488.2 582.5,490.2 578.0,502.2 552.1,500.1" fill="#6e6e6e"/>
<polygon points="546.6,514.6 572.5,516.7 567.9,528.9 541.9,526.8" fill="#6e6e6e"/>
<polygon points="579.1,481.3 577.4,485.9 577.4,498.8 579.1,494.2" fill="#7e7e7e"/>
<polygon points="555.1,484.3 577.4,485.9 577.4,498.8 555.1,497.1" fill="#9c9c9c"/>
<polygon points="556.9,479.7 579.1,481.3 577.4,485.9 555.1,484.3" fill="#c4c4c4"/>
<polygon points="577.4,485.9 570.2,504.8 570.2,517.8 577.4,498.8" fill="#4a3505"/>
<polygon points="547.9,503.1 570.2,504.8 570.2,517.8 547.9,516.0" fill="#6b4d08"/>
<polygon points="555.1,484.3 577.4,485.9 570.2,504.8 547.9,503.1" fill="#8a6612"/>
<polygon points="570.2,504.8 567.7,511.5 567.7,524.5 570.2,517.8" fill="#7e7e7e"/>
<polygon points="545.3,509.7 567.7,511.5 567.7,524.5 545.3,522.6" fill="#9c9c9c"/>
<polygon points="547.9,503.1 570.2,504.8 567.7,511.5 545.3,509.7" fill="#c4c4c4"/>
<polygon points="587.3,492.4 602.2,493.5 599.1,502.0 584.1,500.8" fill="#6e6e6e"/>
<polygon points="598.8,493.0 596.5,499.0 596.5,500.5 598.8,494.5" fill="#8a8a8a"/>
<polygon points="589.8,498.5 596.5,499.0 596.5,500.5 589.8,500.0" fill="#9a9a9a"/>
<polygon points="592.0,492.5 598.8,493.0 596.5,499.0 589.8,498.5" fill="#bdbdbd"/>
<polygon points="605.5,488.5 598.8,493.2 596.5,499.2 603.3,494.5" fill="#a8a8a8"/>
<polygon points="577.6,518.4 592.6,519.6 589.5,528.2 574.4,526.9" fill="#6e6e6e"/>
<polygon points="589.2,519.0 586.9,525.2 586.9,526.7 589.2,520.6" fill="#8a8a8a"/>
<polygon points="580.1,524.6 586.9,525.2 586.9,526.7 580.1,526.1" fill="#9a9a9a"/>
<polygon points="582.4,518.5 589.2,519.0 586.9,525.2 580.1,524.6" fill="#bdbdbd"/>
<polygon points="596.0,514.6 589.2,519.3 586.9,525.4 593.7,520.7" fill="#a8a8a8"/>
<polygon points="634.9,482.3 621.9,518.8 621.9,530.6 634.9,493.9" fill="#1f1f1f"/>
<polygon points="593.0,516.5 621.9,518.8 621.9,530.6 593.0,528.2" fill="#303030"/>
<polygon points="606.4,480.2 634.9,482.3 621.9,518.8 593.0,516.5" fill="#3a3a3a"/>
<polygon points="638.7,495.1 661.5,496.8 658.6,505.4 635.7,503.6" fill="#6e6e6e"/>
<polygon points="634.5,489.5 645.1,495.5 643.0,501.6 632.4,495.5" fill="#acacac"/>
<polygon points="655.7,496.1 653.6,502.2 653.6,503.7 655.7,497.6" fill="#868686"/>
<polygon points="643.0,501.4 653.6,502.2 653.6,503.7 643.0,502.9" fill="#9a9a9a"/>
<polygon points="645.1,495.3 655.7,496.1 653.6,502.2 643.0,501.4" fill="#c2c2c2"/>
<polygon points="633.8,509.1 656.7,510.9 653.7,519.5 630.8,517.6" fill="#6e6e6e"/>
<polygon points="629.6,503.4 640.2,509.5 638.1,515.6 627.4,509.5" fill="#acacac"/>
<polygon points="650.9,510.1 648.8,516.3 648.8,517.8 650.9,511.7" fill="#868686"/>
<polygon points="638.1,515.4 648.8,516.3 648.8,517.8 638.1,516.9" fill="#9a9a9a"/>
<polygon points="640.2,509.3 650.9,510.1 648.8,516.3 638.1,515.4" fill="#c2c2c2"/>
<polygon points="629.1,522.3 652.1,524.2 649.1,532.9 626.1,531.0" fill="#6e6e6e"/>
<polygon points="624.9,516.6 635.6,522.8 633.4,529.0 622.7,522.8" fill="#acacac"/>
<polygon points="646.3,523.4 644.1,529.6 644.1,531.2 646.3,525.0" fill="#868686"/>
<polygon points="633.4,528.7 644.1,529.6 644.1,531.2 633.4,530.3" fill="#9a9a9a"/>
<polygon points="635.6,522.5 646.3,523.4 644.1,529.6 633.4,528.7" fill="#c2c2c2"/>
<defs><linearGradient id="gl" x1="0" y1="0" x2="0" y2="1"><stop offset="0" stop-color="#4a4a4a"/><stop offset="1" stop-color="#3a3a3a"/></linearGradient></defs>
<polygon points="669.6,522.1 682.4,536.7 715.2,542.6 736.2,541.8 742.5,536.7 740.7,529.4 671.4,525.8" fill="#6a6a6a"/>
<polygon points="672.3,518.5 681.4,522.1 717.9,525.8 733.4,519.4 745.6,478.4 754.4,493.0 742.5,533.1 735.2,541.3 715.2,542.2 682.4,536.7 671.4,529.4" fill="url(#gl)"/>
<polyline points="682.0,524.3 679.8,529.4 681.6,535.3" fill="none" stroke="#b4746a" stroke-width="1.10"/>
<polyline points="728.3,528.7 727.6,534.0 729.8,538.9" fill="none" stroke="#b4746a" stroke-width="1.10"/>
<polygon points="668.7,511.2 681.4,517.6 717.9,521.2 733.4,514.8 745.6,474.7 747.1,479.3 733.8,519.9 717.9,526.5 681.4,522.5 670.5,515.8" fill="#7b7b7b"/>
<polygon points="682.4,468.3 696.9,464.7 735.2,466.5 745.6,474.7 733.4,514.8 717.9,521.2 681.4,517.6 668.7,511.2" fill="#696969"/>
<polyline points="666.9,540.4 740.7,546.2" fill="none" stroke="#e4e4e4" stroke-width="1.30"/>
<polyline points="746.2,487.1 759.9,488.2" fill="none" stroke="#e4e4e4" stroke-width="1.20"/>
<polyline points="759.9,467.4 754.4,480.2 751.7,479.8" fill="none" stroke="#e4e4e4" stroke-width="1.20"/>
<polyline points="761.7,437.3 766.3,437.9 763.0,451.0" fill="none" stroke="#e4e4e4" stroke-width="1.20"/>
<polygon points="809.3,513.0 828.4,514.4 825.6,524.5 806.4,523.0" fill="#6e6e6e"/>
<polygon points="803.4,533.8 822.6,535.3 819.8,545.6 800.5,544.0" fill="#6e6e6e"/>
<polygon points="825.3,512.9 824.4,516.0 824.4,521.8 825.3,518.7" fill="#7e7e7e"/>
<polygon points="809.1,514.8 824.4,516.0 824.4,521.8 809.1,520.6" fill="#9c9c9c"/>
<polygon points="810.0,511.7 825.3,512.9 824.4,516.0 809.1,514.8" fill="#c4c4c4"/>
<polygon points="824.4,516.0 820.3,530.6 820.3,536.5 824.4,521.8" fill="#222222"/>
<polygon points="805.0,529.4 820.3,530.6 820.3,536.5 805.0,535.2" fill="#2e2e2e"/>
<polygon points="809.1,514.8 824.4,516.0 820.3,530.6 805.0,529.4" fill="#3b3b3b"/>
<polygon points="820.3,530.6 819.1,535.1 819.1,540.9 820.3,536.5" fill="#7e7e7e"/>
<polygon points="803.7,533.8 819.1,535.1 819.1,540.9 803.7,539.7" fill="#9c9c9c"/>
<polygon points="805.0,529.4 820.3,530.6 819.1,535.1 803.7,533.8" fill="#c4c4c4"/>
<polyline points="876.1,533.9 870.5,558.2 878.3,559.3" fill="none" stroke="#e4e4e4" stroke-width="1.30"/>
<polyline points="921.4,505.1 907.0,560.9 901.1,560.4" fill="none" stroke="#e4e4e4" stroke-width="1.30"/>
<polygon points="880.5,542.7 903.7,545.4 901.5,557.1 878.9,554.9" fill="#6e6e6e"/>
<polygon points="914.8,498.5 917.0,502.9 909.2,540.5 905.9,542.7 909.2,525.0" fill="#222"/>
<polygon points="878.3,520.6 909.2,525.0 905.9,542.7 877.2,536.1" fill="#303030"/>
<polygon points="883.8,491.9 914.8,498.5 909.2,525.0 878.3,520.6" fill="#3a3a3a"/>
<polyline points="878.3,522.4 904.8,526.4" fill="none" stroke="#bdbdbd" stroke-width="1.60"/>
<polygon points="884.9,537.2 897.5,538.8 896.2,551.6 883.8,549.8" fill="#c6c6c6"/>
<polygon points="883.8,549.8 896.2,551.6 896.0,554.2 883.8,552.7" fill="#8e8e8e"/>
<polyline points="883.4,496.7 909.9,496.7" fill="none" stroke="#ff00ff" stroke-width="2.30"/>
<polyline points="897.1,491.0 894.9,502.0" fill="none" stroke="#ff00ff" stroke-width="2.30"/>
<polyline points="892.7,511.3 889.3,523.3" fill="none" stroke="#ff00ff" stroke-width="2.20"/>
<polyline points="922.8,503.8 919.2,504.7 907.3,561.2 880.0,558.5" fill="none" stroke="#e4e4e4" stroke-width="1.30"/>
<polyline points="975.7,505.6 967.5,551.2 937.4,548.5 938.0,546.7" fill="none" stroke="#e4e4e4" stroke-width="1.30"/>
<polygon points="929.6,508.0 946.9,508.9 946.0,517.1 928.1,516.2" fill="#6e6e6e"/>
<polygon points="931.0,506.6 942.9,507.5 942.0,515.7 929.6,514.8" fill="#b4b4b4"/>
<polygon points="923.2,535.4 941.4,536.3 940.5,544.8 921.9,543.6" fill="#6e6e6e"/>
<polygon points="924.7,533.9 937.4,534.8 936.5,543.4 923.4,542.1" fill="#b4b4b4"/>
<polygon points="970.6,524.4 988.8,525.3 991.6,533.5 969.7,534.4" fill="#6e6e6e"/>
<polygon points="972.1,523.0 984.8,523.9 987.5,532.1 971.1,533.0" fill="#b4b4b4"/>
<polygon points="974.8,498.4 976.6,502.9 969.3,541.2 966.6,548.5" fill="#222"/>
<polygon points="939.2,534.8 968.4,537.5 966.6,548.5 937.4,545.7" fill="#303030"/>
<polygon points="945.6,496.5 974.8,498.4 968.4,537.5 939.2,534.8" fill="#3a3a3a"/>
<polygon points="928.9,525.7 938.3,520.8 938.7,526.6" fill="#e4e4e4"/>
<polygon points="958.4,484.7 966.0,481.4 965.7,489.8" fill="#e4e4e4"/>
<polygon points="943.6,474.8 956.9,475.6 955.5,487.8 942.3,486.9" fill="#6e6e6e"/>
<polygon points="944.7,473.7 954.7,474.5 953.3,485.6 943.4,484.7" fill="#b2b2b2"/>
<polygon points="978.8,476.7 991.9,477.4 990.1,490.2 977.3,489.1" fill="#6e6e6e"/>
<polygon points="979.9,475.6 989.7,476.3 987.9,488.0 978.4,486.9" fill="#b2b2b2"/>
<polygon points="997.6,447.3 999.6,450.4 995.9,479.6 993.9,478.3" fill="#242424"/>
<polygon points="945.6,444.6 997.6,447.3 993.9,478.3 941.1,473.7" fill="#3a3a3a"/>
<polyline points="940.2,469.2 939.8,475.6 943.8,475.9" fill="none" stroke="#e4e4e4" stroke-width="1.20"/>
<polyline points="960.2,477.8 974.8,478.5" fill="none" stroke="#e4e4e4" stroke-width="1.20"/>
<polyline points="991.2,445.5 998.5,446.8 1000.3,451.9" fill="none" stroke="#e4e4e4" stroke-width="1.20"/>
<polygon points="1001.5,535.9 1010.1,536.6 1013.7,560.2 1025.6,561.1 1024.7,568.5 996.0,566.0" fill="#6c6c6c"/>
<polygon points="1124.7,569.5 1136.9,570.3 1138.3,547.3 1154.1,547.3 1157.7,528.0 1162.7,528.4 1154.1,579.1 1125.0,576.3" fill="#686868"/>
<polygon points="1162.0,422.1 1169.1,430.6 1166.2,484.3 1165.1,490.0 1154.1,547.3 1148.3,527.3 1146.9,508.7" fill="#847b6e"/>
<polygon points="1151.9,468.5 1160.5,471.4 1158.4,492.9 1151.9,523.0 1149.1,527.3 1147.3,510.1" fill="#6e675c"/>
<polygon points="1118.3,517.5 1147.6,521.5 1153.4,547.3 1138.3,547.3 1136.2,532.3 1122.6,530.1" fill="#aca290"/>
<polygon points="992.2,509.4 1023.0,510.4 1027.0,510.7 1022.7,530.4 1014.1,531.9 1001.5,537.0" fill="#b7ad9b"/>
<polygon points="1014.4,527.0 1023.0,529.9 1025.3,559.7 1018.1,560.5" fill="#c0b6a3"/>
<polygon points="1026.7,510.4 1036.7,511.2 1028.1,558.2 1024.7,559.7 1022.4,530.1" fill="#6c655a"/>
<polygon points="1036.2,510.7 1118.3,517.5 1121.1,529.4 1123.3,567.7 1026.1,561.1 1027.9,557.4" fill="#cdc4b2"/>
<polygon points="1025.8,560.8 1123.3,568.3 1124.1,574.0 1026.1,565.4" fill="#b6ad9b"/>
<polygon points="1118.3,517.5 1122.1,518.4 1121.8,530.1 1119.7,528.7" fill="#3c3830"/>
<polygon points="1058.8,503.6 1081.0,505.5 1081.0,515.1 1058.8,513.2" fill="#cdc4b2"/>
<polygon points="1001.5,535.9 1015.1,523.0 1023.0,530.1 1025.8,560.2 1014.4,560.9" fill="#bdb3a0"/>
<polygon points="1048.8,512.2 1059.7,513.0 1056.2,523.3 1050.2,522.4" fill="#b2b4b6"/>
<polygon points="1087.4,515.8 1098.3,516.5 1094.9,526.7 1089.7,525.8" fill="#b2b4b6"/>
<polygon points="1008.7,523.0 1015.2,523.7 1013.8,533.7 1018.1,559.7 1013.2,560.2 1007.9,534.4" fill="#b0b0b0"/>
<polyline points="1008.4,533.9 1014.1,534.2" fill="none" stroke="#e6e6e6" stroke-width="1.50"/>
<polygon points="1129.7,532.3 1136.4,532.3 1135.6,543.0 1136.4,569.7 1132.1,568.8 1129.7,543.8" fill="#a8a8a8"/>
<polyline points="1129.9,543.0 1135.6,543.3" fill="none" stroke="#dcdcdc" stroke-width="1.50"/>
<polygon points="1136.4,543.0 1140.5,547.3 1137.6,570.0 1136.4,569.7" fill="#5c5c5c"/>
<polygon points="990.7,497.2 1146.9,508.7 1147.9,521.8 1118.3,518.0 1080.3,514.1 1078.9,506.1 1061.9,504.6 1059.7,512.7 1024.4,510.7 992.2,509.8" fill="#b1a795"/>
<polygon points="1010.8,410.1 1036.6,411.5 1025.1,471.7 1043.8,473.1 1056.6,412.2 1111.8,415.8 1101.8,476.7 1121.1,477.4 1131.9,417.2 1160.8,418.7 1146.9,508.7 990.7,497.2" fill="#c3b9a6"/>
<polygon points="1036.6,412.9 1039.0,420.8 1040.2,439.4 1040.2,473.1 1025.1,471.7" fill="#6c655a"/>
<polygon points="1037.6,438.7 1050.2,440.1 1043.9,473.1 1040.2,473.1" fill="#a9a08f"/>
<polygon points="1111.8,417.9 1114.1,420.8 1113.8,444.2 1106.4,476.8 1101.8,476.7" fill="#6c655a"/>
<polygon points="1113.2,443.9 1126.8,445.3 1121.1,477.4 1106.4,476.8" fill="#a9a08f"/>
<path d="M-6.5 2.6 c-2.6 0.2 -4 -1.6 -3.2 -3.4 c0.6 -1.6 2.6 -2.2 4.2 -1.8 c0.8 -1.6 3.4 -2.2 5.2 -1.2 c1.2 -1.2 3.6 -1 4.4 0.4 c2 -0.2 3.4 1.6 2.6 3.2 c-0.6 1.4 -2.4 2 -4 1.6 c-1 1.6 -3.6 2.2 -5.4 1.2 c-1 0.8 -2.8 0.8 -3.8 0z M2.2 -2.6 c-1.4 0.4 -2.6 1.2 -3.4 2.2" fill="none" stroke="#111" stroke-width="1.5" transform="translate(1087.8 489.9) rotate(4) scale(1.45)"/>
<text transform="translate(1068.1 478.7) rotate(184) skewX(10)" font-family="DejaVu Sans, sans-serif" font-size="6.8" fill="#222">EasyEDA</text>
<text transform="translate(1068.1 486.9) rotate(184) skewX(10)" font-family="DejaVu Sans, sans-serif" font-size="6.8" fill="#222">JLC DA</text>
<ellipse cx="271" cy="500" rx="15" ry="6.5" fill="#686868" transform="rotate(4 271 500)"/>
<ellipse cx="334.5" cy="504.8" rx="18" ry="7" fill="#686868" transform="rotate(4 334 505)"/>
<polyline points="241.8,499.0 252.5,499.9" fill="none" stroke="#e4e4e4" stroke-width="1.60"/>
<polyline points="286.8,502.8 313.7,504.4" fill="none" stroke="#e4e4e4" stroke-width="1.60"/>
<polygon points="391.8,406.8 401.8,407.6 400.3,412.2 390.3,411.4" fill="#6f6f6f"/>
<polygon points="383.3,405.2 394.3,406.1 392.6,410.9 381.6,410.0" fill="#d8a92c"/>
<polygon points="381.6,410.0 392.6,410.9 392.4,412.0 381.6,411.1" fill="#9c7a1c"/>
<polygon points="388.3,414.2 398.3,415.0 396.8,419.6 386.8,418.8" fill="#6f6f6f"/>
<polygon points="379.7,412.5 390.9,413.5 389.2,418.4 377.9,417.5" fill="#d8a92c"/>
<polygon points="377.9,417.5 389.2,418.4 389.0,419.5 377.9,418.6" fill="#9c7a1c"/>
<polygon points="384.8,421.6 394.8,422.4 393.3,427.0 383.3,426.2" fill="#6f6f6f"/>
<polygon points="376.0,419.9 387.5,420.9 385.8,425.9 374.3,424.9" fill="#d8a92c"/>
<polygon points="374.3,424.9 385.8,425.9 385.5,427.0 374.3,426.1" fill="#9c7a1c"/>
<polygon points="381.3,429.1 391.3,429.9 389.8,434.5 379.8,433.7" fill="#6f6f6f"/>
<polygon points="372.4,427.3 384.1,428.3 382.3,433.4 370.6,432.4" fill="#d8a92c"/>
<polygon points="370.6,432.4 382.3,433.4 382.1,434.6 370.6,433.6" fill="#9c7a1c"/>
<polygon points="377.8,436.5 387.8,437.3 386.3,441.9 376.3,441.1" fill="#6f6f6f"/>
<polygon points="368.7,434.7 380.7,435.7 378.9,440.9 366.9,439.9" fill="#d8a92c"/>
<polygon points="366.9,439.9 378.9,440.9 378.7,442.1 366.9,441.1" fill="#9c7a1c"/>
<polygon points="374.3,444.0 384.3,444.8 382.8,449.4 372.8,448.6" fill="#6f6f6f"/>
<polygon points="365.1,442.1 377.3,443.1 375.4,448.4 363.2,447.4" fill="#d8a92c"/>
<polygon points="363.2,447.4 375.4,448.4 375.2,449.6 363.2,448.6" fill="#9c7a1c"/>
<polygon points="370.8,451.4 380.8,452.2 379.3,456.8 369.3,456.0" fill="#6f6f6f"/>
<polygon points="361.4,449.4 373.9,450.5 372.0,455.9 359.5,454.9" fill="#d8a92c"/>
<polygon points="359.5,454.9 372.0,455.9 371.8,457.2 359.5,456.1" fill="#9c7a1c"/>
<polygon points="367.3,458.9 377.3,459.7 375.8,464.3 365.8,463.5" fill="#6f6f6f"/>
<polygon points="357.8,456.8 370.5,457.9 368.6,463.4 355.8,462.4" fill="#d8a92c"/>
<polygon points="355.8,462.4 368.6,463.4 368.3,464.7 355.8,463.6" fill="#9c7a1c"/>
<polygon points="363.8,466.3 373.8,467.1 372.3,471.7 362.3,470.9" fill="#6f6f6f"/>
<polygon points="354.1,464.2 367.1,465.3 365.1,470.9 352.1,469.9" fill="#d8a92c"/>
<polygon points="352.1,469.9 365.1,470.9 364.9,472.2 352.1,471.2" fill="#9c7a1c"/>
<polygon points="360.3,473.7 370.3,474.5 368.8,479.1 358.8,478.3" fill="#6f6f6f"/>
<polygon points="350.5,471.6 363.7,472.7 361.7,478.4 348.4,477.3" fill="#d8a92c"/>
<polygon points="348.4,477.3 361.7,478.4 361.5,479.8 348.4,478.7" fill="#9c7a1c"/>
<polygon points="356.8,481.2 366.8,482.0 365.3,486.6 355.3,485.8" fill="#6f6f6f"/>
<polygon points="346.8,478.9 360.3,480.0 358.3,485.9 344.8,484.8" fill="#d8a92c"/>
<polygon points="344.8,484.8 358.3,485.9 358.0,487.3 344.8,486.2" fill="#9c7a1c"/>
<polygon points="353.3,488.6 363.3,489.4 361.8,494.0 351.8,493.2" fill="#6f6f6f"/>
<polygon points="343.2,486.3 357.0,487.4 354.8,493.4 341.1,492.3" fill="#d8a92c"/>
<polygon points="341.1,492.3 354.8,493.4 354.6,494.8 341.1,493.7" fill="#9c7a1c"/>
<polygon points="352.7,372.1 370.4,365.0 377.4,368.8 387.6,394.2 344.9,503.1 335.4,505.3 323.9,465.0 327.2,456.2 315.0,450.7 338.9,396.9" fill="#151515"/>
<polygon points="354.9,376.1 374.8,378.3 366.4,399.1 339.8,396.9" fill="#2e2e2e"/>
<polygon points="364.2,383.2 377.0,387.6 363.7,423.0 352.7,416.4" fill="#242424"/>
<polygon points="341.6,429.6 352.7,435.2 341.6,465.0 330.5,460.6" fill="#222"/>
<polyline points="370.8,365.5 378.3,370.4 388.1,394.2 346.0,502.7" fill="none" stroke="#8c8c8c" stroke-width="2.20" stroke-linejoin="round"/>
<polygon points="253.6,485.2 274.4,486.8 281.7,494.1 277.8,502.8 262.6,503.7 258.7,496.9" fill="#acacac"/>
<polygon points="274.4,486.8 278.9,486.8 285.6,496.4 281.7,494.1" fill="#5a5a5a"/>
<polygon points="273.3,500.9 281.7,494.1 285.6,496.4 283.4,502.0 277.8,504.8" fill="#6e6e6e"/>
<polygon points="247.5,484.6 253.6,485.2 258.7,496.9 262.6,503.7 258.7,502.6" fill="#4a4a4a"/>
<polygon points="313.7,490.2 325.5,491.3 340.1,508.7 324.4,509.3 319.9,503.1" fill="#b4b4b4"/>
<polygon points="308.1,489.3 313.7,490.2 319.9,503.1 324.4,509.3 320.4,508.7" fill="#4a4a4a"/>
<polygon points="325.5,491.3 329.4,490.8 344.0,507.1 340.1,508.7" fill="#6a6a6a"/>
<polygon points="313.9,450.0 327.2,455.3 335.0,461.7 323.0,461.1" fill="#2a2a2a"/>
<defs><linearGradient id="gu" x1="0" y1="0" x2="0.12" y2="1"><stop offset="0" stop-color="#b2b2b2"/><stop offset="0.35" stop-color="#e0e0e0"/><stop offset="0.6" stop-color="#c4c4c4"/><stop offset="1" stop-color="#969696"/></linearGradient><linearGradient id="gt" x1="0" y1="0" x2="1" y2="0.3"><stop offset="0" stop-color="#b4b4b4"/><stop offset="1" stop-color="#aeaeae"/></linearGradient></defs>
<polygon points="212.8,453.5 323.9,460.2 328.3,465.5 342.0,504.9 333.6,509.7 321.2,492.9 306.2,490.3 275.2,486.3 247.6,484.1 233.2,488.9 222.1,488.3 213.7,470.6" fill="url(#gu)"/>
<polygon points="264.2,358.4 370.4,365.0 368.1,371.0 352.7,373.2 338.9,396.9 356.0,398.2 341.6,427.9 326.1,426.3 315.0,450.7 323.9,460.6 212.8,453.5 215.5,447.3" fill="url(#gt)"/>
<polyline points="264.6,358.6 370.4,365.3" fill="none" stroke="#8e8e8e" stroke-width="1.20"/>
<polyline points="352.7,373.2 369.2,371.7" fill="none" stroke="#d0d0d0" stroke-width="1.60"/>
<polyline points="339.8,397.1 365.5,399.1" fill="none" stroke="#8a8a8a" stroke-width="1.40"/>
<polygon points="325.7,426.3 339.4,430.1 338.9,452.9 332.3,454.0 327.2,450.7" fill="#dedede"/>
<polygon points="326.1,427.0 315.5,450.7 327.2,455.8 327.0,450.7" fill="#303030"/>
<path d="M-4.4 4.6 c-2.4 0.6 -4.2 -1 -3.6 -3 c0.4 -1.4 1.8 -2.2 3.2 -2 c-0.6 -2.2 1.2 -4 3.4 -3.6 c1.2 -1.6 4 -1.2 4.6 0.8 c2 0.2 2.8 2.4 1.6 3.8 c0.6 2 -1.2 3.6 -3.2 3 c-1.2 1.6 -4.4 2 -6 1z M3.6 -3 c-1.6 -0.2 -3 0.6 -3.6 1.8" fill="none" stroke="#111" stroke-width="1.6" transform="translate(263.6 396.5) scale(1.12)"/>
<text transform="translate(260.1 404.4) rotate(118) skewX(-12)" font-family="DejaVu Sans, sans-serif" font-size="5.2" fill="#222">EasyEDA</text>
<text transform="translate(265.6 407.9) rotate(118) skewX(-12)" font-family="DejaVu Sans, sans-serif" font-size="5.2" fill="#222">JLC DA</text>
<polyline points="179.0,476.7 256.5,483.2" fill="none" stroke="#ff1010" stroke-width="1.20"/>
<polyline points="223.4,470.2 200.5,514.0" fill="none" stroke="#ff1010" stroke-width="1.20"/>
<ellipse cx="348.2" cy="372.7" rx="3.4" ry="2.7" fill="#ff00ff"/>
<ellipse cx="312.8" cy="445.8" rx="3.2" ry="2.6" fill="#ff00ff"/>
<ellipse cx="310.2" cy="464.4" rx="3.0" ry="2.4" fill="#ff00ff"/>
<ellipse cx="392.8" cy="457.1" rx="4.3" ry="3.4" fill="#ff00ff"/>
<ellipse cx="424.2" cy="381.5" rx="1.8" ry="1.4" fill="#ff00ff"/>
<ellipse cx="446.0" cy="382.5" rx="1.8" ry="1.4" fill="#ff00ff"/>
<ellipse cx="514.5" cy="397.0" rx="3.4" ry="2.7" fill="#ff00ff"/>
<ellipse cx="507.5" cy="395.7" rx="1.5" ry="1.2" fill="#ff00ff"/>
<ellipse cx="541.4" cy="381.2" rx="2.0" ry="1.6" fill="#ff00ff"/>
<ellipse cx="596.5" cy="399.5" rx="4.0" ry="3.2" fill="#ff00ff"/>
<ellipse cx="479.4" cy="426.1" rx="2.3" ry="1.8" fill="#ff00ff"/>
<ellipse cx="470.6" cy="445.5" rx="2.1" ry="1.7" fill="#ff00ff"/>
<ellipse cx="537.7" cy="441.0" rx="3.8" ry="3.0" fill="#ff00ff"/>
<ellipse cx="548.8" cy="459.7" rx="2.1" ry="1.7" fill="#ff00ff"/>
<ellipse cx="552.6" cy="502.9" rx="3.5" ry="2.8" fill="#ff00ff"/>
<ellipse cx="588.0" cy="422.6" rx="2.0" ry="1.6" fill="#ff00ff"/>
<ellipse cx="645.7" cy="440.4" rx="2.0" ry="1.6" fill="#ff00ff"/>
<ellipse cx="670.6" cy="441.6" rx="2.0" ry="1.6" fill="#ff00ff"/>
<ellipse cx="641.4" cy="458.6" rx="3.4" ry="2.7" fill="#ff00ff"/>
<ellipse cx="636.5" cy="513.9" rx="4.6" ry="3.7" fill="#ff00ff"/>
<ellipse cx="625.3" cy="510.8" rx="1.5" ry="1.2" fill="#ff00ff"/>
<ellipse cx="733.2" cy="490.4" rx="3.8" ry="3.0" fill="#ff00ff"/>
<ellipse cx="756.6" cy="410.0" rx="2.0" ry="1.6" fill="#ff00ff"/>
<ellipse cx="787.6" cy="468.0" rx="2.0" ry="1.6" fill="#ff00ff"/>
<ellipse cx="814.1" cy="469.7" rx="2.0" ry="1.6" fill="#ff00ff"/>
<ellipse cx="840.0" cy="471.5" rx="2.0" ry="1.6" fill="#ff00ff"/>
<ellipse cx="807.5" cy="531.0" rx="2.0" ry="1.6" fill="#ff00ff"/>
<ellipse cx="892.6" cy="469.3" rx="2.2" ry="1.8" fill="#ff00ff"/>
<ellipse cx="887.2" cy="529.3" rx="2.1" ry="1.7" fill="#ff00ff"/>
<ellipse cx="928.0" cy="499.2" rx="3.7" ry="3.0" fill="#ff00ff"/>
<ellipse cx="935.3" cy="498.6" rx="1.4" ry="1.1" fill="#ff00ff"/>
<ellipse cx="810.3" cy="411.7" rx="2.0" ry="1.6" fill="#ff00ff"/>
<ellipse cx="931.4" cy="425.0" rx="2.1" ry="1.7" fill="#ff00ff"/>
<ellipse cx="855.3" cy="346.4" rx="4.3" ry="3.4" fill="#ff00ff"/>
<ellipse cx="843.5" cy="389.6" rx="4.3" ry="3.4" fill="#ff00ff"/>
<ellipse cx="793.9" cy="352.0" rx="1.8" ry="1.4" fill="#ff00ff"/>
<ellipse cx="828.2" cy="350.3" rx="2.0" ry="1.6" fill="#ff00ff"/>
<ellipse cx="932.3" cy="339.1" rx="2.0" ry="1.6" fill="#ff00ff"/>
<ellipse cx="957.4" cy="349.8" rx="3.5" ry="2.8" fill="#ff00ff"/>
<ellipse cx="956.0" cy="354.2" rx="1.5" ry="1.2" fill="#ff00ff"/>
<ellipse cx="936.6" cy="404.8" rx="2.1" ry="1.7" fill="#ff00ff"/>
<ellipse cx="1013.2" cy="376.4" rx="2.0" ry="1.6" fill="#ff00ff"/>
<ellipse cx="947.1" cy="469.2" rx="1.6" ry="1.3" fill="#ff00ff"/>
<ellipse cx="945.6" cy="476.5" rx="3.8" ry="3.0" fill="#ff00ff"/>
<ellipse cx="1068.5" cy="390.2" rx="2.1" ry="1.7" fill="#ff00ff"/>
<ellipse cx="478.5" cy="309.2" rx="1.8" ry="1.4" fill="#ff00ff"/>
<ellipse cx="470.6" cy="327.2" rx="1.9" ry="1.5" fill="#ff00ff"/>
<ellipse cx="462.8" cy="347.2" rx="1.8" ry="1.4" fill="#ff00ff"/>
<polyline points="500.0,310.0 506.4,310.6" fill="none" stroke="#ff00ff" stroke-width="1.30"/>
<polyline points="503.7,307.7 502.7,312.9" fill="none" stroke="#ff00ff" stroke-width="1.30"/>
<polyline points="491.0,327.9 497.4,328.5" fill="none" stroke="#ff00ff" stroke-width="1.30"/>
<polyline points="494.7,325.6 493.7,330.8" fill="none" stroke="#ff00ff" stroke-width="1.30"/>
<polyline points="991.5,335.1 998.5,335.7" fill="none" stroke="#ff00ff" stroke-width="1.30"/>
<polyline points="995.5,332.6 994.5,338.2" fill="none" stroke="#ff00ff" stroke-width="1.30"/>
<polyline points="986.4,355.1 993.4,355.7" fill="none" stroke="#ff00ff" stroke-width="1.30"/>
<polyline points="990.4,352.6 989.4,358.2" fill="none" stroke="#ff00ff" stroke-width="1.30"/>
<polyline points="481.0,324.6 477.5,332.4" fill="none" stroke="#ff00ff" stroke-width="1.80"/>
<polyline points="1009.2,351.2 1006.4,360.4" fill="none" stroke="#ff00ff" stroke-width="1.80"/>
<text transform="matrix(1.5531 0.0795 -0.5791 1.2085 392.10 327.75)" x="0" y="3.65" text-anchor="middle" font-family="DejaVu Sans, sans-serif" font-size="10.0" font-weight="normal" fill="#e4e4e4" stroke="#e4e4e4" stroke-width="0.38" textLength="16.06" lengthAdjust="spacingAndGlyphs">SW1</text>
<text transform="matrix(1.7620 0.0862 -0.5623 1.3349 534.65 321.55)" x="0" y="3.65" text-anchor="middle" font-family="DejaVu Sans, sans-serif" font-size="10.0" font-weight="normal" fill="#e4e4e4" stroke="#e4e4e4" stroke-width="0.38" textLength="18.02" lengthAdjust="spacingAndGlyphs">LED1</text>
<text transform="matrix(1.6888 0.0878 -0.5431 1.2905 527.90 339.50)" x="0" y="3.65" text-anchor="middle" font-family="DejaVu Sans, sans-serif" font-size="10.0" font-weight="normal" fill="#e4e4e4" stroke="#e4e4e4" stroke-width="0.38" textLength="20.24" lengthAdjust="spacingAndGlyphs">LED2</text>
<text transform="matrix(1.8215 0.1005 -0.5975 1.4063 510.55 357.50)" x="0" y="3.65" text-anchor="middle" font-family="DejaVu Sans, sans-serif" font-size="10.0" font-weight="normal" fill="#e4e4e4" stroke="#e4e4e4" stroke-width="0.38" textLength="9.29" lengthAdjust="spacingAndGlyphs">R3</text>
<text transform="matrix(1.5056 0.0865 -0.4708 1.1620 552.10 373.70)" x="0" y="3.65" text-anchor="middle" font-family="DejaVu Sans, sans-serif" font-size="10.0" font-weight="normal" fill="#e4e4e4" stroke="#e4e4e4" stroke-width="0.38" textLength="10.58" lengthAdjust="spacingAndGlyphs">R2</text>
<text transform="matrix(1.5728 0.1043 -0.5452 1.2562 460.75 420.70)" x="0" y="3.65" text-anchor="middle" font-family="DejaVu Sans, sans-serif" font-size="10.0" font-weight="normal" fill="#e4e4e4" stroke="#e4e4e4" stroke-width="0.38" textLength="9.85" lengthAdjust="spacingAndGlyphs">C4</text>
<text transform="matrix(1.6810 0.1112 -0.4785 1.3105 629.80 430.90)" x="0" y="3.65" text-anchor="middle" font-family="DejaVu Sans, sans-serif" font-size="10.0" font-weight="normal" fill="#e4e4e4" stroke="#e4e4e4" stroke-width="0.38" textLength="16.45" lengthAdjust="spacingAndGlyphs">C12</text>
<text transform="matrix(1.6780 0.1248 -0.5508 1.3562 510.00 471.90)" x="0" y="3.65" text-anchor="middle" font-family="DejaVu Sans, sans-serif" font-size="10.0" font-weight="normal" fill="#e4e4e4" stroke="#e4e4e4" stroke-width="0.38" textLength="8.78" lengthAdjust="spacingAndGlyphs">U1</text>
<text transform="matrix(1.6647 0.1285 -0.5287 1.3489 538.70 490.70)" x="0" y="3.65" text-anchor="middle" font-family="DejaVu Sans, sans-serif" font-size="10.0" font-weight="normal" fill="#e4e4e4" stroke="#e4e4e4" stroke-width="0.38" textLength="8.95" lengthAdjust="spacingAndGlyphs">C1</text>
<text transform="matrix(1.6472 0.1355 -0.5319 1.3532 524.35 520.00)" x="0" y="3.65" text-anchor="middle" font-family="DejaVu Sans, sans-serif" font-size="10.0" font-weight="normal" fill="#e4e4e4" stroke="#e4e4e4" stroke-width="0.38" textLength="17.07" lengthAdjust="spacingAndGlyphs">C16</text>
<text transform="matrix(1.6560 0.1054 -0.4419 1.2743 680.05 418.80)" x="0" y="3.65" text-anchor="middle" font-family="DejaVu Sans, sans-serif" font-size="10.0" font-weight="normal" fill="#e4e4e4" stroke="#e4e4e4" stroke-width="0.38" textLength="16.07" lengthAdjust="spacingAndGlyphs">C11</text>
<text transform="matrix(1.8799 0.1416 -0.5116 1.4907 665.05 489.05)" x="0" y="3.65" text-anchor="middle" font-family="DejaVu Sans, sans-serif" font-size="10.0" font-weight="normal" fill="#e4e4e4" stroke="#e4e4e4" stroke-width="0.38" textLength="8.57" lengthAdjust="spacingAndGlyphs">U6</text>
<text transform="matrix(1.7765 0.1137 -0.4106 1.3490 783.70 427.70)" x="0" y="3.65" text-anchor="middle" font-family="DejaVu Sans, sans-serif" font-size="10.0" font-weight="normal" fill="#e4e4e4" stroke="#e4e4e4" stroke-width="0.38" textLength="10.11" lengthAdjust="spacingAndGlyphs">C8</text>
<text transform="matrix(1.5847 0.0972 -0.3615 1.1940 792.45 411.70)" x="0" y="3.65" text-anchor="middle" font-family="DejaVu Sans, sans-serif" font-size="10.0" font-weight="normal" fill="#e4e4e4" stroke="#e4e4e4" stroke-width="0.38" textLength="11.12" lengthAdjust="spacingAndGlyphs">C9</text>
<text transform="matrix(1.6741 0.1265 -0.3860 1.3073 785.35 499.60)" x="0" y="3.65" text-anchor="middle" font-family="DejaVu Sans, sans-serif" font-size="10.0" font-weight="normal" fill="#e4e4e4" stroke="#e4e4e4" stroke-width="0.38" textLength="11.49" lengthAdjust="spacingAndGlyphs">C7</text>
<text transform="matrix(1.8759 0.1416 -0.4150 1.4593 813.00 501.25)" x="0" y="3.65" text-anchor="middle" font-family="DejaVu Sans, sans-serif" font-size="10.0" font-weight="normal" fill="#e4e4e4" stroke="#e4e4e4" stroke-width="0.38" textLength="10.19" lengthAdjust="spacingAndGlyphs">C6</text>
<text transform="matrix(1.9003 0.1435 -0.4028 1.4730 840.65 503.50)" x="0" y="3.65" text-anchor="middle" font-family="DejaVu Sans, sans-serif" font-size="10.0" font-weight="normal" fill="#e4e4e4" stroke="#e4e4e4" stroke-width="0.38" textLength="10.05" lengthAdjust="spacingAndGlyphs">C5</text>
<text transform="matrix(1.8399 0.1470 -0.4225 1.4511 788.10 526.70)" x="0" y="3.65" text-anchor="middle" font-family="DejaVu Sans, sans-serif" font-size="10.0" font-weight="normal" fill="#e4e4e4" stroke="#e4e4e4" stroke-width="0.38" textLength="10.90" lengthAdjust="spacingAndGlyphs">R6</text>
<text transform="matrix(1.8790 0.1546 -0.4520 1.4966 756.00 538.90)" x="0" y="3.65" text-anchor="middle" font-family="DejaVu Sans, sans-serif" font-size="10.0" font-weight="normal" fill="#e4e4e4" stroke="#e4e4e4" stroke-width="0.38" textLength="8.22" lengthAdjust="spacingAndGlyphs">L1</text>
<text transform="matrix(1.7484 0.1160 -0.3472 1.3181 881.05 448.70)" x="0" y="3.65" text-anchor="middle" font-family="DejaVu Sans, sans-serif" font-size="10.0" font-weight="normal" fill="#e4e4e4" stroke="#e4e4e4" stroke-width="0.38" textLength="11.85" lengthAdjust="spacingAndGlyphs">U3</text>
<text transform="matrix(1.7546 0.1195 -0.3304 1.3231 912.55 462.00)" x="0" y="3.65" text-anchor="middle" font-family="DejaVu Sans, sans-serif" font-size="10.0" font-weight="normal" fill="#e4e4e4" stroke="#e4e4e4" stroke-width="0.38" textLength="11.20" lengthAdjust="spacingAndGlyphs">R5</text>
<text transform="matrix(1.8952 0.1486 -0.3874 1.4750 863.35 523.40)" x="0" y="3.65" text-anchor="middle" font-family="DejaVu Sans, sans-serif" font-size="10.0" font-weight="normal" fill="#e4e4e4" stroke="#e4e4e4" stroke-width="0.38" textLength="9.61" lengthAdjust="spacingAndGlyphs">D1</text>
<text transform="matrix(1.7388 0.0827 -0.3200 1.2418 925.60 332.00)" x="0" y="3.65" text-anchor="middle" font-family="DejaVu Sans, sans-serif" font-size="10.0" font-weight="normal" fill="#e4e4e4" stroke="#e4e4e4" stroke-width="0.38" textLength="11.30" lengthAdjust="spacingAndGlyphs">R8</text>
<text transform="matrix(1.9109 0.0908 -0.3257 1.3566 967.85 333.70)" x="0" y="3.65" text-anchor="middle" font-family="DejaVu Sans, sans-serif" font-size="10.0" font-weight="normal" fill="#e4e4e4" stroke="#e4e4e4" stroke-width="0.38" textLength="20.87" lengthAdjust="spacingAndGlyphs">LED3</text>
<text transform="matrix(1.7547 0.0892 -0.3309 1.2664 911.60 352.30)" x="0" y="3.65" text-anchor="middle" font-family="DejaVu Sans, sans-serif" font-size="10.0" font-weight="normal" fill="#e4e4e4" stroke="#e4e4e4" stroke-width="0.38" textLength="10.69" lengthAdjust="spacingAndGlyphs">U4</text>
<text transform="matrix(1.8734 0.1094 -0.3536 1.3787 911.20 400.10)" x="0" y="3.65" text-anchor="middle" font-family="DejaVu Sans, sans-serif" font-size="10.0" font-weight="normal" fill="#e4e4e4" stroke="#e4e4e4" stroke-width="0.38" textLength="8.54" lengthAdjust="spacingAndGlyphs">Q4</text>
<text transform="matrix(1.7858 0.1032 -0.2875 1.2973 997.50 401.40)" x="0" y="3.65" text-anchor="middle" font-family="DejaVu Sans, sans-serif" font-size="10.0" font-weight="normal" fill="#e4e4e4" stroke="#e4e4e4" stroke-width="0.38" textLength="22.53" lengthAdjust="spacingAndGlyphs">LED4</text>
<text transform="matrix(1.6973 0.1038 -0.2877 1.2480 970.80 421.30)" x="0" y="3.65" text-anchor="middle" font-family="DejaVu Sans, sans-serif" font-size="10.0" font-weight="normal" fill="#e4e4e4" stroke="#e4e4e4" stroke-width="0.38" textLength="18.17" lengthAdjust="spacingAndGlyphs">C14</text>
<text transform="matrix(1.6362 0.1035 -0.2786 1.2100 968.35 434.75)" x="0" y="3.65" text-anchor="middle" font-family="DejaVu Sans, sans-serif" font-size="10.0" font-weight="normal" fill="#e4e4e4" stroke="#e4e4e4" stroke-width="0.38" textLength="19.93" lengthAdjust="spacingAndGlyphs">C13</text>
<text transform="matrix(1.6589 0.0974 -0.3821 1.2428 786.00 394.80)" x="0" y="3.65" text-anchor="middle" font-family="DejaVu Sans, sans-serif" font-size="10.0" font-weight="normal" fill="#e4e4e4" stroke="#e4e4e4" stroke-width="0.38" textLength="11.56" lengthAdjust="spacingAndGlyphs">R7</text>
<text transform="matrix(1.6898 0.0951 -0.4365 1.2724 704.60 375.00)" x="0" y="3.65" text-anchor="middle" font-family="DejaVu Sans, sans-serif" font-size="10.0" font-weight="normal" fill="#e4e4e4" stroke="#e4e4e4" stroke-width="0.38" textLength="17.97" lengthAdjust="spacingAndGlyphs">SW3</text>
</svg>
</div>
<div class="cb" style="left:30.3px;top:114.2px"></div>
<div class="cb" style="left:29.9px;top:142.8px;width:14.1px;height:14.1px;background:#0a6cff;box-shadow:none;padding:1px"><svg width="12" height="12" viewBox="0 0 12 12" style="display:block"><path d="M2.4 6.1L5 8.6L9.8 3.2" fill="none" stroke="#fff" stroke-width="1.6"/></svg></div>
<div class="cb" style="left:30.3px;top:172.2px"></div>
<span class="t" style="left:54.60px;top:115.00px;font-size:14.50px;line-height:17px;letter-spacing:0.097px;color:#222;">Hide Drilled Holes</span>
<span class="t" style="left:54.60px;top:143.00px;font-size:14.50px;line-height:17px;letter-spacing:0.120px;color:#1a6fff;">Show Components</span>
<span class="t" style="left:54.60px;top:171.00px;font-size:14.50px;line-height:17px;letter-spacing:0.113px;color:#222;">Show Designator</span>
<span class="t" style="left:30.50px;top:638.00px;font-size:12.50px;line-height:15px;letter-spacing:-0.465px;color:#9a9aa2;">X: 37.14mm</span>
<span class="t" style="left:30.50px;top:659.00px;font-size:12.50px;line-height:15px;letter-spacing:-0.200px;color:#9a9aa2;">Y: 22.41mm</span>
<span class="t" style="left:30.50px;top:686.00px;font-size:12.50px;line-height:15px;letter-spacing:0.168px;color:#8c8c94;">*The image shows the parts placement adjusted by our engineer. Please verify the orientation and position of the components.</span>
<div id="panel"></div>
<span class="t" style="left:1026.50px;top:123.00px;font-size:17.00px;line-height:20px;letter-spacing:0.079px;color:#222;-webkit-text-stroke:0.55px #222;">Confirm Parts Placement</span>
<span class="t" style="left:1026.50px;top:159.00px;font-size:13.70px;line-height:16px;letter-spacing:0.713px;color:#222;-webkit-text-stroke:0.50px #222;">Can we proceed PCBA with the corrected parts</span>
<span class="t" style="left:1026.50px;top:179.00px;font-size:13.70px;line-height:16px;letter-spacing:0.741px;color:#222;-webkit-text-stroke:0.50px #222;">placement?</span>
<div class="opt" style="top:206.3px;border-color:#1a73ff;background:#f7f9ff"></div>
<svg class="a" style="left:1374px;top:229.5px" width="12" height="12" viewBox="0 0 12 12"><path d="M12 0V12H0Z" fill="#1a73ff"/><path d="M6.4 8.6L7.9 10L10.6 6.8" fill="none" stroke="#fff" stroke-width="1"/></svg>
<div class="opt" style="top:252.3px"></div>
<span class="t" style="left:1038.10px;top:217.00px;font-size:13.70px;line-height:16px;letter-spacing:0.558px;color:#1a73ff;">Yes, please proceed to production.</span>
<span class="t" style="left:1037.60px;top:263.00px;font-size:13.70px;line-height:16px;letter-spacing:0.593px;color:#222;">No, modification needed.</span>
<div class="a" style="left:1026px;top:308px;width:360px;height:40px;border-radius:20px;background:#0a6cff"></div>
<span class="t" style="left:1183.60px;top:319.00px;font-size:15.00px;line-height:18px;letter-spacing:-0.317px;color:#fff;">Submit</span>
<div id="handle"><div class="a" style="left:688.5px;top:8.5px;width:30px;height:4px;border-top:1px solid #cfcfd6;border-bottom:1px solid #cfcfd6"></div></div>
<div class="a" style="left:30.3px;top:744px;width:111.4px;height:30px;background:#424244;border-radius:8px 8px 0 0"></div>
<div class="a" style="left:141.7px;top:744px;width:128px;height:30px;background:#e0e1ef;border-radius:8px 8px 0 0"></div>
<span class="t" style="left:48.50px;top:757.00px;font-size:14.50px;line-height:17px;letter-spacing:-0.271px;color:#fff;font-weight:700;">Assembled</span>
<span class="t" style="left:160.30px;top:757.00px;font-size:14.50px;line-height:17px;letter-spacing:-0.289px;color:#b3b4c6;font-weight:700;">Unassembled</span>
<span class="t" style="left:621.70px;top:757.00px;font-size:14.50px;line-height:17px;letter-spacing:0.131px;color:#444;">Assembly Side: Top</span>
<span class="t" style="left:772.70px;top:757.00px;font-size:14.50px;line-height:17px;letter-spacing:0.259px;color:#444;">Total 44</span>
<span class="t" style="left:1154.30px;top:756.00px;font-size:14.50px;line-height:17px;letter-spacing:-0.354px;color:#222;">DFM</span>
<div class="a" style="left:913.3px;top:757.5px;width:210.2px;height:30px;border:1px solid #d4d5de;border-radius:4px"></div>
<div class="a" style="left:1253.3px;top:757.5px;width:122.6px;height:30px;border:1px solid #d4d5de;border-radius:4px"></div>
<div class="a" style="left:1095px;top:765.3px;width:13px;height:13px;border:1.6px solid #333;border-radius:50%"></div>
<div class="a" style="left:301px;top:766.6px;width:13px;height:13px;border:1px solid #c8c8d0;border-radius:2px"></div>
<div class="a" style="left:1228px;top:766.6px;width:13px;height:13px;border:1.2px solid #b8b8c2;border-radius:50%"></div>
<div class="a" style="left:1396px;top:741.5px;width:10px;height:40px;background:#d5d7e6;border-radius:5px 5px 0 0"></div>
</div>
</body>
</html>
